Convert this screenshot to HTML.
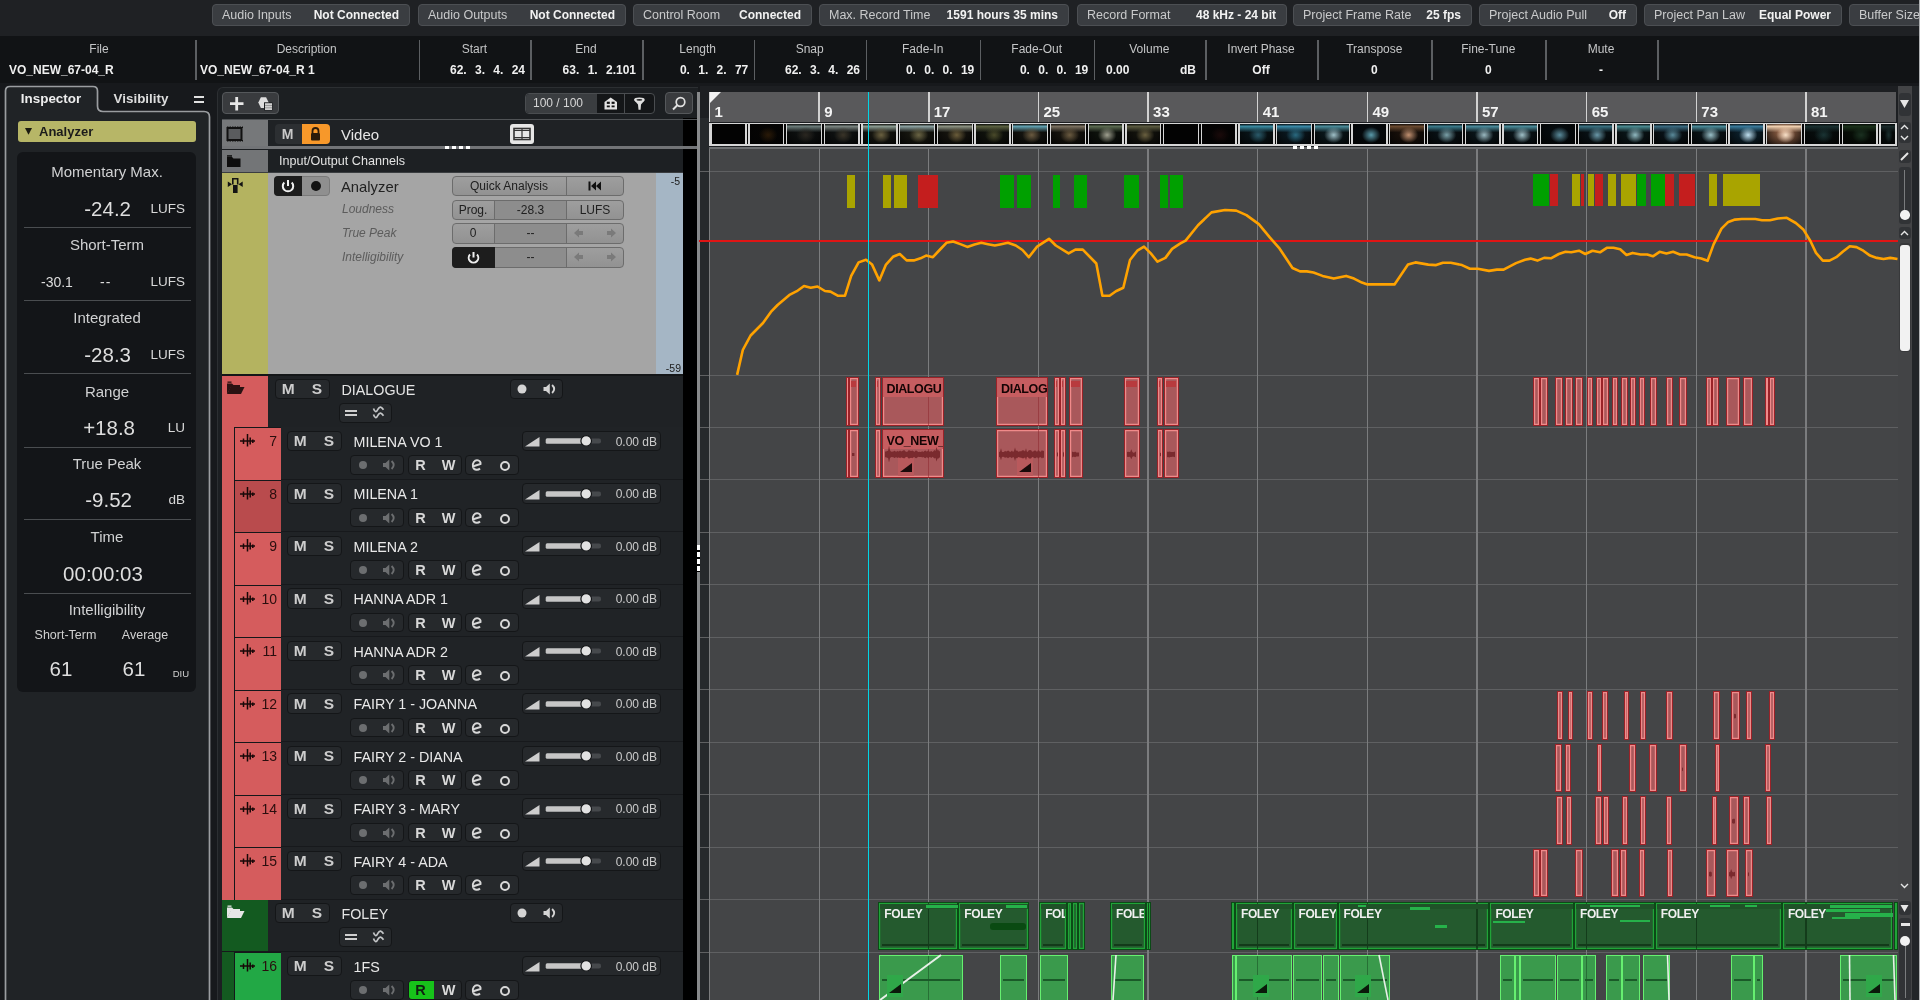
<!DOCTYPE html><html><head><meta charset="utf-8"><style>
*{box-sizing:border-box;margin:0;padding:0}
html,body{width:1920px;height:1000px;overflow:hidden}
body{background:#17191c;font-family:"Liberation Sans",sans-serif;position:relative;color:#ddd}
div{position:absolute}
.btn{background:#2c2f32;border-radius:4px;border:1px solid #26292c}
</style></head><body><div id="root" style="position:absolute;left:0;top:0;width:1920px;height:1000px;will-change:transform">
<div style="position:absolute;left:0px;top:0px;width:1920px;height:36px;background:#1f2124"></div>
<div style="position:absolute;left:212px;top:4px;width:198px;height:22px;background:#3a3d41;border:1px solid #4c4f53;border-radius:4px"></div>
<div style="position:absolute;left:222px;top:4.5px;height:20px;line-height:20px;white-space:pre;font-size:12.5px;color:#c9cacb">Audio Inputs</div>
<div style="position:absolute;left:99px;width:300px;text-align:right;top:4.5px;height:20px;line-height:20px;white-space:pre;font-size:12px;color:#f2f2f2;font-weight:bold">Not Connected</div>
<div style="position:absolute;left:418px;top:4px;width:208px;height:22px;background:#3a3d41;border:1px solid #4c4f53;border-radius:4px"></div>
<div style="position:absolute;left:428px;top:4.5px;height:20px;line-height:20px;white-space:pre;font-size:12.5px;color:#c9cacb">Audio Outputs</div>
<div style="position:absolute;left:315px;width:300px;text-align:right;top:4.5px;height:20px;line-height:20px;white-space:pre;font-size:12px;color:#f2f2f2;font-weight:bold">Not Connected</div>
<div style="position:absolute;left:633px;top:4px;width:179px;height:22px;background:#3a3d41;border:1px solid #4c4f53;border-radius:4px"></div>
<div style="position:absolute;left:643px;top:4.5px;height:20px;line-height:20px;white-space:pre;font-size:12.5px;color:#c9cacb">Control Room</div>
<div style="position:absolute;left:501px;width:300px;text-align:right;top:4.5px;height:20px;line-height:20px;white-space:pre;font-size:12px;color:#f2f2f2;font-weight:bold">Connected</div>
<div style="position:absolute;left:819px;top:4px;width:250px;height:22px;background:#3a3d41;border:1px solid #4c4f53;border-radius:4px"></div>
<div style="position:absolute;left:829px;top:4.5px;height:20px;line-height:20px;white-space:pre;font-size:12.5px;color:#c9cacb">Max. Record Time</div>
<div style="position:absolute;left:758px;width:300px;text-align:right;top:4.5px;height:20px;line-height:20px;white-space:pre;font-size:12px;color:#f2f2f2;font-weight:bold">1591 hours 35 mins</div>
<div style="position:absolute;left:1077px;top:4px;width:210px;height:22px;background:#3a3d41;border:1px solid #4c4f53;border-radius:4px"></div>
<div style="position:absolute;left:1087px;top:4.5px;height:20px;line-height:20px;white-space:pre;font-size:12.5px;color:#c9cacb">Record Format</div>
<div style="position:absolute;left:976px;width:300px;text-align:right;top:4.5px;height:20px;line-height:20px;white-space:pre;font-size:12px;color:#f2f2f2;font-weight:bold">48 kHz - 24 bit</div>
<div style="position:absolute;left:1293px;top:4px;width:179px;height:22px;background:#3a3d41;border:1px solid #4c4f53;border-radius:4px"></div>
<div style="position:absolute;left:1303px;top:4.5px;height:20px;line-height:20px;white-space:pre;font-size:12.5px;color:#c9cacb">Project Frame Rate</div>
<div style="position:absolute;left:1161px;width:300px;text-align:right;top:4.5px;height:20px;line-height:20px;white-space:pre;font-size:12px;color:#f2f2f2;font-weight:bold">25 fps</div>
<div style="position:absolute;left:1479px;top:4px;width:158px;height:22px;background:#3a3d41;border:1px solid #4c4f53;border-radius:4px"></div>
<div style="position:absolute;left:1489px;top:4.5px;height:20px;line-height:20px;white-space:pre;font-size:12.5px;color:#c9cacb">Project Audio Pull</div>
<div style="position:absolute;left:1326px;width:300px;text-align:right;top:4.5px;height:20px;line-height:20px;white-space:pre;font-size:12px;color:#f2f2f2;font-weight:bold">Off</div>
<div style="position:absolute;left:1644px;top:4px;width:198px;height:22px;background:#3a3d41;border:1px solid #4c4f53;border-radius:4px"></div>
<div style="position:absolute;left:1654px;top:4.5px;height:20px;line-height:20px;white-space:pre;font-size:12.5px;color:#c9cacb">Project Pan Law</div>
<div style="position:absolute;left:1531px;width:300px;text-align:right;top:4.5px;height:20px;line-height:20px;white-space:pre;font-size:12px;color:#f2f2f2;font-weight:bold">Equal Power</div>
<div style="position:absolute;left:1849px;top:4px;width:111px;height:22px;background:#3a3d41;border:1px solid #4c4f53;border-radius:4px"></div>
<div style="position:absolute;left:1859px;top:4.5px;height:20px;line-height:20px;white-space:pre;font-size:12.5px;color:#c9cacb">Buffer Size</div>
<div style="position:absolute;left:0px;top:36px;width:1920px;height:47px;background:#111315"></div>
<div style="position:absolute;left:195.2px;top:40px;width:1.5px;height:40px;background:#5c5f62"></div>
<div style="position:absolute;left:418.5px;top:40px;width:1.5px;height:40px;background:#5c5f62"></div>
<div style="position:absolute;left:530.2px;top:40px;width:1.5px;height:40px;background:#5c5f62"></div>
<div style="position:absolute;left:642.2px;top:40px;width:1.5px;height:40px;background:#5c5f62"></div>
<div style="position:absolute;left:753.8px;top:40px;width:1.5px;height:40px;background:#5c5f62"></div>
<div style="position:absolute;left:865.5px;top:40px;width:1.5px;height:40px;background:#5c5f62"></div>
<div style="position:absolute;left:979.5px;top:40px;width:1.5px;height:40px;background:#5c5f62"></div>
<div style="position:absolute;left:1093.5px;top:40px;width:1.5px;height:40px;background:#5c5f62"></div>
<div style="position:absolute;left:1205.2px;top:40px;width:1.5px;height:40px;background:#5c5f62"></div>
<div style="position:absolute;left:1317.2px;top:40px;width:1.5px;height:40px;background:#5c5f62"></div>
<div style="position:absolute;left:1431.2px;top:40px;width:1.5px;height:40px;background:#5c5f62"></div>
<div style="position:absolute;left:1545.2px;top:40px;width:1.5px;height:40px;background:#5c5f62"></div>
<div style="position:absolute;left:1657.2px;top:40px;width:1.5px;height:40px;background:#5c5f62"></div>
<div style="position:absolute;left:-51px;width:300px;text-align:center;top:38.5px;height:20px;line-height:20px;white-space:pre;font-size:12px;color:#c4c5c6">File</div>
<div style="position:absolute;left:156.7px;width:300px;text-align:center;top:38.5px;height:20px;line-height:20px;white-space:pre;font-size:12px;color:#c4c5c6">Description</div>
<div style="position:absolute;left:324.3px;width:300px;text-align:center;top:38.5px;height:20px;line-height:20px;white-space:pre;font-size:12px;color:#c4c5c6">Start</div>
<div style="position:absolute;left:436px;width:300px;text-align:center;top:38.5px;height:20px;line-height:20px;white-space:pre;font-size:12px;color:#c4c5c6">End</div>
<div style="position:absolute;left:547.7px;width:300px;text-align:center;top:38.5px;height:20px;line-height:20px;white-space:pre;font-size:12px;color:#c4c5c6">Length</div>
<div style="position:absolute;left:659.7px;width:300px;text-align:center;top:38.5px;height:20px;line-height:20px;white-space:pre;font-size:12px;color:#c4c5c6">Snap</div>
<div style="position:absolute;left:772.7px;width:300px;text-align:center;top:38.5px;height:20px;line-height:20px;white-space:pre;font-size:12px;color:#c4c5c6">Fade-In</div>
<div style="position:absolute;left:886.7px;width:300px;text-align:center;top:38.5px;height:20px;line-height:20px;white-space:pre;font-size:12px;color:#c4c5c6">Fade-Out</div>
<div style="position:absolute;left:999.3px;width:300px;text-align:center;top:38.5px;height:20px;line-height:20px;white-space:pre;font-size:12px;color:#c4c5c6">Volume</div>
<div style="position:absolute;left:1111px;width:300px;text-align:center;top:38.5px;height:20px;line-height:20px;white-space:pre;font-size:12px;color:#c4c5c6">Invert Phase</div>
<div style="position:absolute;left:1224.3px;width:300px;text-align:center;top:38.5px;height:20px;line-height:20px;white-space:pre;font-size:12px;color:#c4c5c6">Transpose</div>
<div style="position:absolute;left:1338.3px;width:300px;text-align:center;top:38.5px;height:20px;line-height:20px;white-space:pre;font-size:12px;color:#c4c5c6">Fine-Tune</div>
<div style="position:absolute;left:1451px;width:300px;text-align:center;top:38.5px;height:20px;line-height:20px;white-space:pre;font-size:12px;color:#c4c5c6">Mute</div>
<div style="position:absolute;left:9px;top:60px;height:20px;line-height:20px;white-space:pre;font-size:12px;color:#f0f0f0;font-weight:bold">VO_NEW_67-04_R</div>
<div style="position:absolute;left:200px;top:60px;height:20px;line-height:20px;white-space:pre;font-size:12px;color:#f0f0f0;font-weight:bold">VO_NEW_67-04_R 1</div>
<div style="position:absolute;left:225px;width:300px;text-align:right;top:60px;height:20px;line-height:20px;white-space:pre;font-size:12px;color:#f0f0f0;font-weight:bold;word-spacing:5px">62. 3. 4. 24</div>
<div style="position:absolute;left:336px;width:300px;text-align:right;top:60px;height:20px;line-height:20px;white-space:pre;font-size:12px;color:#f0f0f0;font-weight:bold;word-spacing:5px">63. 1. 2.101</div>
<div style="position:absolute;left:448.29999999999995px;width:300px;text-align:right;top:60px;height:20px;line-height:20px;white-space:pre;font-size:12px;color:#f0f0f0;font-weight:bold;word-spacing:5px">0. 1. 2. 77</div>
<div style="position:absolute;left:560px;width:300px;text-align:right;top:60px;height:20px;line-height:20px;white-space:pre;font-size:12px;color:#f0f0f0;font-weight:bold;word-spacing:5px">62. 3. 4. 26</div>
<div style="position:absolute;left:674.3px;width:300px;text-align:right;top:60px;height:20px;line-height:20px;white-space:pre;font-size:12px;color:#f0f0f0;font-weight:bold;word-spacing:5px">0. 0. 0. 19</div>
<div style="position:absolute;left:788.3px;width:300px;text-align:right;top:60px;height:20px;line-height:20px;white-space:pre;font-size:12px;color:#f0f0f0;font-weight:bold;word-spacing:5px">0. 0. 0. 19</div>
<div style="position:absolute;left:1106px;top:60px;height:20px;line-height:20px;white-space:pre;font-size:12px;color:#f0f0f0;font-weight:bold">0.00</div>
<div style="position:absolute;left:896px;width:300px;text-align:right;top:60px;height:20px;line-height:20px;white-space:pre;font-size:12px;color:#f0f0f0;font-weight:bold">dB</div>
<div style="position:absolute;left:1111px;width:300px;text-align:center;top:60px;height:20px;line-height:20px;white-space:pre;font-size:12px;color:#f0f0f0;font-weight:bold">Off</div>
<div style="position:absolute;left:1224.3px;width:300px;text-align:center;top:60px;height:20px;line-height:20px;white-space:pre;font-size:12px;color:#f0f0f0;font-weight:bold">0</div>
<div style="position:absolute;left:1338.3px;width:300px;text-align:center;top:60px;height:20px;line-height:20px;white-space:pre;font-size:12px;color:#f0f0f0;font-weight:bold">0</div>
<div style="position:absolute;left:1451px;width:300px;text-align:center;top:60px;height:20px;line-height:20px;white-space:pre;font-size:12px;color:#f0f0f0;font-weight:bold">-</div>
<svg style="position:absolute;left:0;top:82px" width="217" height="918"><path d="M5.5 918 V9 Q5.5 4.5 10 4.5 H93 Q97.5 4.5 97.5 9 V24 Q97.5 29.5 103 29.5 H204 Q209.5 29.5 209.5 35 V918" fill="#202326" stroke="#9a9da0" stroke-width="1.7"/></svg>
<div style="position:absolute;left:-99px;width:300px;text-align:center;top:89px;height:20px;line-height:20px;white-space:pre;font-size:13.4px;font-weight:bold;color:#eeeeee">Inspector</div>
<div style="position:absolute;left:-9px;width:300px;text-align:center;top:89px;height:20px;line-height:20px;white-space:pre;font-size:13.4px;font-weight:bold;color:#dddddd">Visibility</div>
<div style="position:absolute;left:194px;top:96px;width:9.5px;height:2.2px;background:#e0e0e0"></div>
<div style="position:absolute;left:194px;top:100.5px;width:9.5px;height:2.2px;background:#e0e0e0"></div>
<div style="position:absolute;left:18px;top:121px;width:178px;height:21px;background:#b7b667;border-radius:3px"></div>
<svg style="position:absolute;left:24.5px;top:128px" width="8" height="8"><path d="M0 0 H7 L3.5 6.8Z" fill="#1b1b10"/></svg>
<div style="position:absolute;left:39px;top:122px;height:20px;line-height:20px;white-space:pre;font-size:13px;font-weight:bold;color:#1b1b1b">Analyzer</div>
<div style="position:absolute;left:17px;top:152px;width:179px;height:540px;background:#131518;border-radius:6px"></div>
<div style="position:absolute;left:-43px;width:300px;text-align:center;top:162px;height:20px;line-height:20px;white-space:pre;font-size:15px;color:#d0d1d2">Momentary Max.</div>
<div style="position:absolute;left:-169px;width:300px;text-align:right;top:199px;height:20px;line-height:20px;white-space:pre;font-size:20.5px;color:#dedede">-24.2</div>
<div style="position:absolute;left:-115px;width:300px;text-align:right;top:199px;height:20px;line-height:20px;white-space:pre;font-size:13.5px;color:#d8d8d8">LUFS</div>
<div style="position:absolute;left:24px;top:227px;width:167px;height:1.2px;background:#4a4d50"></div>
<div style="position:absolute;left:-43px;width:300px;text-align:center;top:235px;height:20px;line-height:20px;white-space:pre;font-size:15px;color:#d0d1d2">Short-Term</div>
<div style="position:absolute;left:41px;top:271.5px;height:20px;line-height:20px;white-space:pre;font-size:14px;color:#dcdcdc">-30.1</div>
<div style="position:absolute;left:100px;top:271.5px;height:20px;line-height:20px;white-space:pre;font-size:14px;color:#dcdcdc;letter-spacing:1px">--</div>
<div style="position:absolute;left:-115px;width:300px;text-align:right;top:271.5px;height:20px;line-height:20px;white-space:pre;font-size:13.5px;color:#d8d8d8">LUFS</div>
<div style="position:absolute;left:24px;top:300px;width:167px;height:1.2px;background:#4a4d50"></div>
<div style="position:absolute;left:-43px;width:300px;text-align:center;top:308px;height:20px;line-height:20px;white-space:pre;font-size:15px;color:#d0d1d2">Integrated</div>
<div style="position:absolute;left:-169px;width:300px;text-align:right;top:344.5px;height:20px;line-height:20px;white-space:pre;font-size:20.5px;color:#dedede">-28.3</div>
<div style="position:absolute;left:-115px;width:300px;text-align:right;top:344.5px;height:20px;line-height:20px;white-space:pre;font-size:13.5px;color:#d8d8d8">LUFS</div>
<div style="position:absolute;left:24px;top:373px;width:167px;height:1.2px;background:#4a4d50"></div>
<div style="position:absolute;left:-43px;width:300px;text-align:center;top:381.5px;height:20px;line-height:20px;white-space:pre;font-size:15px;color:#d0d1d2">Range</div>
<div style="position:absolute;left:-165px;width:300px;text-align:right;top:417.8px;height:20px;line-height:20px;white-space:pre;font-size:20.5px;color:#dedede">+18.8</div>
<div style="position:absolute;left:-115px;width:300px;text-align:right;top:417.8px;height:20px;line-height:20px;white-space:pre;font-size:13.5px;color:#d8d8d8">LU</div>
<div style="position:absolute;left:24px;top:446.5px;width:167px;height:1.2px;background:#4a4d50"></div>
<div style="position:absolute;left:-43px;width:300px;text-align:center;top:454px;height:20px;line-height:20px;white-space:pre;font-size:15px;color:#d0d1d2">True Peak</div>
<div style="position:absolute;left:-168px;width:300px;text-align:right;top:490.4px;height:20px;line-height:20px;white-space:pre;font-size:20.5px;color:#dedede">-9.52</div>
<div style="position:absolute;left:-115px;width:300px;text-align:right;top:490.4px;height:20px;line-height:20px;white-space:pre;font-size:13.5px;color:#d8d8d8">dB</div>
<div style="position:absolute;left:24px;top:519px;width:167px;height:1.2px;background:#4a4d50"></div>
<div style="position:absolute;left:-43px;width:300px;text-align:center;top:527.3px;height:20px;line-height:20px;white-space:pre;font-size:15px;color:#d0d1d2">Time</div>
<div style="position:absolute;left:-47px;width:300px;text-align:center;top:563.6px;height:20px;line-height:20px;white-space:pre;font-size:20.5px;color:#dedede">00:00:03</div>
<div style="position:absolute;left:24px;top:592.5px;width:167px;height:1.2px;background:#4a4d50"></div>
<div style="position:absolute;left:-43px;width:300px;text-align:center;top:600.3px;height:20px;line-height:20px;white-space:pre;font-size:15px;color:#d0d1d2">Intelligibility</div>
<div style="position:absolute;left:-84.5px;width:300px;text-align:center;top:625px;height:20px;line-height:20px;white-space:pre;font-size:12.5px;color:#d0d0d0">Short-Term</div>
<div style="position:absolute;left:-5px;width:300px;text-align:center;top:625px;height:20px;line-height:20px;white-space:pre;font-size:12.5px;color:#d0d0d0">Average</div>
<div style="position:absolute;left:-89px;width:300px;text-align:center;top:658.7px;height:20px;line-height:20px;white-space:pre;font-size:20.5px;color:#dedede">61</div>
<div style="position:absolute;left:-16px;width:300px;text-align:center;top:658.7px;height:20px;line-height:20px;white-space:pre;font-size:20.5px;color:#dedede">61</div>
<div style="position:absolute;left:-111px;width:300px;text-align:right;top:664.3px;height:20px;line-height:20px;white-space:pre;font-size:9.5px;color:#cfcfcf">DIU</div>
<div style="position:absolute;left:216.5px;top:86.5px;width:481px;height:920px;background:#1c1f22;border-left:1px solid #2c2f32;border-top:1px solid #2c2f32;border-radius:6px 0 0 0"></div>
<div style="position:absolute;left:222px;top:92px;width:57px;height:22px;background:#393b3e;border-radius:4px;border:1.2px solid #55585b"></div>
<svg style="position:absolute;left:228px;top:95px" width="48" height="16"><path d="M8.7 2v13.5M2 8.7h13.5" stroke="#e8e8e8" stroke-width="2.8"/><path d="M30.3 7.6 L32.9 2.2 H38.1 L40.7 7.6 L38.1 13 H32.9Z" fill="#dedede"/><rect x="36" y="7.3" width="8.5" height="8.2" fill="#1c1e20"/><rect x="37" y="8.2" width="7" height="6.8" fill="#d0d0d0"/><path d="M37 10.5 H44 M37 12.8 H44" stroke="#8a8a8a" stroke-width="0.8"/></svg>
<div style="position:absolute;left:525px;top:93px;width:129.5px;height:21px;background:#141618;border-radius:4px;border:1.2px solid #4a4d50"></div>
<div style="position:absolute;left:525.5px;top:93.6px;width:71px;height:19.8px;background:#3a3d40;border-radius:3px 0 0 3px"></div>
<div style="position:absolute;left:408px;width:300px;text-align:center;top:93px;height:20px;line-height:20px;white-space:pre;font-size:12px;color:#d6d6d6">100 / 100</div>
<div style="position:absolute;left:624px;top:93.5px;width:1.2px;height:20px;background:#4a4d50"></div>
<svg style="position:absolute;left:603px;top:96px" width="44" height="16"><path d="M1.5 13.5 V6 L7.7 1.6 L14 6 V13.5Z" fill="#e4e4e4"/><rect x="3.8" y="5.7" width="3" height="2.2" fill="#111"/><rect x="8.6" y="5.7" width="3" height="2.2" fill="#111"/><rect x="3.8" y="9.5" width="3" height="1.8" fill="#111"/><rect x="8.6" y="9.5" width="3" height="1.8" fill="#111"/><path d="M31.5 4.5 L41.5 4.5 L38 8.5 L37.6 13.7 H35.5 L35 8.5Z" fill="#e0e0e0"/><ellipse cx="36.4" cy="3.8" rx="5.3" ry="2.3" fill="#e0e0e0"/><ellipse cx="36.4" cy="3.8" rx="3" ry="0.9" fill="#222"/></svg>
<div style="position:absolute;left:665px;top:92px;width:28px;height:22px;background:#393b3e;border-radius:4px;border:1.2px solid #55585b"></div>
<svg style="position:absolute;left:671px;top:96px" width="16" height="15"><circle cx="9.5" cy="6" r="4.3" fill="none" stroke="#e0e0e0" stroke-width="1.7"/><path d="M6.5 9 L2 13.5" stroke="#e0e0e0" stroke-width="1.9"/></svg>
<div style="position:absolute;left:683px;top:118px;width:14px;height:882px;background:#000"></div>
<div style="position:absolute;left:697px;top:92px;width:2.5px;height:908px;background:#87898b"></div>
<div style="position:absolute;left:222px;top:118.5px;width:475px;height:1.5px;background:#505356"></div>
<div style="position:absolute;left:222px;top:120px;width:46px;height:26px;background:#76787a"></div>
<div style="position:absolute;left:268px;top:120px;width:415px;height:26px;background:#1f2225"></div>
<svg style="position:absolute;left:226px;top:126px" width="18" height="16"><rect x="1.5" y="2" width="14" height="12" fill="#5a5c5e" stroke="#111" stroke-width="2"/><path d="M1 1.2h16M1 14.8h16" stroke="#111" stroke-width="1.6" stroke-dasharray="1.5 1"/></svg>
<div style="position:absolute;left:275px;top:124px;width:55px;height:20px;background:#2c2f32;border-radius:4px"></div>
<div style="position:absolute;left:301.5px;top:124px;width:28.5px;height:20px;background:#f7982a;border-radius:0 4px 4px 0"></div>
<div style="position:absolute;left:137.5px;width:300px;text-align:center;top:124px;height:20px;line-height:20px;white-space:pre;font-size:14px;font-weight:bold;color:#c9c9c9">M</div>
<svg style="position:absolute;left:309px;top:126px" width="13" height="15"><path d="M3.5 7V5a3 3 0 0 1 6 0v2" fill="none" stroke="#2a1a0a" stroke-width="1.8"/><rect x="2" y="7" width="9" height="7.5" fill="#2a1a0a" rx="1"/></svg>
<div style="position:absolute;left:341px;top:125px;height:20px;line-height:20px;white-space:pre;font-size:15px;color:#e6e6e6">Video</div>
<div style="position:absolute;left:510px;top:124px;width:24px;height:20px;background:#e6e6e6;border-radius:3px"></div>
<svg style="position:absolute;left:513px;top:127px" width="18" height="14"><rect x="1" y="1.5" width="16" height="11" fill="none" stroke="#333" stroke-width="1.6"/><path d="M9 1.5v11M1 3.5h16M1 10.5h16" stroke="#333" stroke-width="1.2"/></svg>
<div style="position:absolute;left:222px;top:146px;width:475px;height:3px;background:#727477"></div>
<div style="position:absolute;left:445px;top:146px;width:27px;height:3px;background:repeating-linear-gradient(90deg,#fff 0 4px,transparent 4px 7px)"></div>
<div style="position:absolute;left:222px;top:150px;width:46px;height:22px;background:#737577"></div>
<div style="position:absolute;left:268px;top:150px;width:415px;height:22px;background:#1d2023"></div>
<svg style="position:absolute;left:226px;top:154px" width="16" height="14"><path d="M1 3 H6 L7.5 4.5 H14.5 V13 H1 Z" fill="#0d0d0d"/><rect x="1" y="1.2" width="5" height="1.5" fill="#0d0d0d"/></svg>
<div style="position:absolute;left:279px;top:151px;height:20px;line-height:20px;white-space:pre;font-size:12.6px;color:#e2e2e2">Input/Output Channels</div>
<div style="position:absolute;left:222px;top:172px;width:461px;height:1px;background:#3a3d40"></div>
<div style="position:absolute;left:222px;top:173px;width:46px;height:201px;background:#b4b360"></div>
<div style="position:absolute;left:268px;top:173px;width:388px;height:201px;background:#a5a5a5"></div>
<div style="position:absolute;left:656px;top:173px;width:27px;height:201px;background:#a5b6c5"></div>
<svg style="position:absolute;left:227px;top:176px" width="18" height="20"><path d="M5.8 8.5 V2.8 H10.7 V8.5" fill="none" stroke="#141414" stroke-width="1.6"/><rect x="6" y="9" width="4.6" height="8" fill="#141414"/><path d="M0.8 5.5 L5 8.3 L0.8 11Z M15.7 5.5 L11.5 8.3 L15.7 11Z" fill="#141414"/></svg>
<div style="position:absolute;left:274px;top:176px;width:56px;height:20px;background:#8f8f8f;border-radius:4px;border:1px solid #7a7a7a"></div>
<div style="position:absolute;left:274px;top:176px;width:28px;height:20px;background:#1c1c1c;border-radius:4px 0 0 4px"></div>
<svg style="position:absolute;left:280px;top:178px" width="44" height="16"><path d="M4.3 4.5 A5.2 5.2 0 1 0 11.7 4.5" fill="none" stroke="#f0f0f0" stroke-width="2"/><path d="M8 2v6" stroke="#f0f0f0" stroke-width="2"/><circle cx="36" cy="8" r="5" fill="#111"/></svg>
<div style="position:absolute;left:341px;top:176.5px;height:20px;line-height:20px;white-space:pre;font-size:14.8px;color:#222">Analyzer</div>
<div style="position:absolute;left:342px;top:199px;height:20px;line-height:20px;white-space:pre;font-size:12px;font-style:italic;color:#5c5c5c">Loudness</div>
<div style="position:absolute;left:342px;top:223px;height:20px;line-height:20px;white-space:pre;font-size:12px;font-style:italic;color:#5c5c5c">True Peak</div>
<div style="position:absolute;left:342px;top:247px;height:20px;line-height:20px;white-space:pre;font-size:12px;font-style:italic;color:#5c5c5c">Intelligibility</div>
<div style="position:absolute;left:452px;top:175.5px;width:172px;height:20.5px;background:linear-gradient(#9e9e9e,#929292);border:1px solid #6c6c6c;border-radius:4px;"></div>
<div style="position:absolute;left:566px;top:176px;width:1px;height:20px;background:#6c6c6c"></div>
<div style="position:absolute;left:359px;width:300px;text-align:center;top:175.5px;height:20px;line-height:20px;white-space:pre;font-size:12px;color:#202020">Quick Analysis</div>
<svg style="position:absolute;left:588px;top:181px" width="14" height="10"><rect x="0.5" y="0.5" width="2" height="9" fill="#111"/><path d="M8 0.5 L3 5 L8 9.5Z M13 0.5 L8 5 L13 9.5Z" fill="#111"/></svg>
<div style="position:absolute;left:452px;top:199.5px;width:172px;height:20.5px;background:linear-gradient(#9e9e9e,#929292);border:1px solid #6c6c6c;border-radius:4px;"></div>
<div style="position:absolute;left:494px;top:200.0px;width:1px;height:19.5px;background:#6c6c6c"></div>
<div style="position:absolute;left:566px;top:200.0px;width:1px;height:19.5px;background:#6c6c6c"></div>
<div style="position:absolute;left:495px;top:200.5px;width:71px;height:18.5px;background:#8d8d8d"></div>
<div style="position:absolute;left:452px;top:223px;width:172px;height:20.5px;background:linear-gradient(#9e9e9e,#929292);border:1px solid #6c6c6c;border-radius:4px;"></div>
<div style="position:absolute;left:494px;top:223.5px;width:1px;height:19.5px;background:#6c6c6c"></div>
<div style="position:absolute;left:566px;top:223.5px;width:1px;height:19.5px;background:#6c6c6c"></div>
<div style="position:absolute;left:495px;top:224px;width:71px;height:18.5px;background:#8d8d8d"></div>
<div style="position:absolute;left:452px;top:247px;width:172px;height:20.5px;background:linear-gradient(#9e9e9e,#929292);border:1px solid #6c6c6c;border-radius:4px;"></div>
<div style="position:absolute;left:494px;top:247.5px;width:1px;height:19.5px;background:#6c6c6c"></div>
<div style="position:absolute;left:566px;top:247.5px;width:1px;height:19.5px;background:#6c6c6c"></div>
<div style="position:absolute;left:495px;top:248px;width:71px;height:18.5px;background:#8d8d8d"></div>
<div style="position:absolute;left:323px;width:300px;text-align:center;top:199.5px;height:20px;line-height:20px;white-space:pre;font-size:12px;color:#202020">Prog.</div>
<div style="position:absolute;left:380.5px;width:300px;text-align:center;top:199.5px;height:20px;line-height:20px;white-space:pre;font-size:12px;color:#202020">-28.3</div>
<div style="position:absolute;left:445px;width:300px;text-align:center;top:199.5px;height:20px;line-height:20px;white-space:pre;font-size:12px;color:#202020">LUFS</div>
<div style="position:absolute;left:323px;width:300px;text-align:center;top:223px;height:20px;line-height:20px;white-space:pre;font-size:12px;color:#202020">0</div>
<div style="position:absolute;left:380.5px;width:300px;text-align:center;top:223px;height:20px;line-height:20px;white-space:pre;font-size:12px;color:#202020">--</div>
<div style="position:absolute;left:380.5px;width:300px;text-align:center;top:247px;height:20px;line-height:20px;white-space:pre;font-size:12px;color:#202020">--</div>
<div style="position:absolute;left:452px;top:247px;width:42.5px;height:20.5px;background:#1d1d1d;border-radius:4px 0 0 4px"></div>
<svg style="position:absolute;left:466px;top:250px" width="15" height="15"><path d="M4 4.5 A4.8 4.8 0 1 0 11 4.5" fill="none" stroke="#f0f0f0" stroke-width="2"/><path d="M7.5 2v5.5" stroke="#f0f0f0" stroke-width="2"/></svg>
<svg style="position:absolute;left:573px;top:228px" width="44" height="10"><path d="M1 5 L6 0.5 V3 H10 V7 H6 V9.5Z" fill="#7a7a7a"/><path d="M43 5 L38 0.5 V3 H34 V7 H38 V9.5Z" fill="#7a7a7a"/></svg>
<svg style="position:absolute;left:573px;top:252px" width="44" height="10"><path d="M1 5 L6 0.5 V3 H10 V7 H6 V9.5Z" fill="#7a7a7a"/><path d="M43 5 L38 0.5 V3 H34 V7 H38 V9.5Z" fill="#7a7a7a"/></svg>
<div style="position:absolute;left:380px;width:300px;text-align:right;top:171px;height:20px;line-height:20px;white-space:pre;font-size:10.5px;color:#202020">-5</div>
<div style="position:absolute;left:381px;width:300px;text-align:right;top:358px;height:20px;line-height:20px;white-space:pre;font-size:10.5px;color:#202020">-59</div>
<div style="position:absolute;left:222px;top:374px;width:461px;height:2px;background:#141618"></div>
<div style="position:absolute;left:222px;top:376px;width:46px;height:51px;background:#d55c5d"></div>
<div style="position:absolute;left:268px;top:376px;width:415px;height:51px;background:#1f2225"></div>
<svg style="position:absolute;left:226px;top:381px" width="20" height="15"><path d="M1 2.5 H6 L7.5 4 H14 V6 H5 L1 13Z" fill="#2a1212"/><path d="M1 13 L4.5 6 H18.5 L15 13Z" fill="#2a1212"/><rect x="1.5" y="0.5" width="4" height="1.3" fill="#2a1212"/></svg>
<div style="position:absolute;left:275px;top:379px;width:55px;height:19.5px;background:#26292c;border-radius:4px;border:1px solid #141618"></div>
<div style="position:absolute;left:138.2px;width:300px;text-align:center;top:379.25px;height:20px;line-height:20px;white-space:pre;font-size:15.5px;font-weight:bold;color:#cdcdcd">M</div>
<div style="position:absolute;left:166.8px;width:300px;text-align:center;top:379.25px;height:20px;line-height:20px;white-space:pre;font-size:15.5px;font-weight:bold;color:#cdcdcd">S</div>
<div style="position:absolute;left:341.5px;top:379.5px;height:20px;line-height:20px;white-space:pre;font-size:14.3px;color:#e4e4e4">DIALOGUE</div>
<div style="position:absolute;left:510px;top:379px;width:52.5px;height:19.5px;background:#26292c;border-radius:4px;border:1px solid #141618"></div>
<svg style="position:absolute;left:515px;top:382px" width="42" height="14"><circle cx="7" cy="7" r="4.5" fill="#d4d4d4"/><g transform="translate(27.5,0)"><path d="M1 5 H3.5 L7.3 1.5 V12.5 L3.5 9 H1Z" fill="#d4d4d4"/><path d="M9.6 3 Q13.8 7 9.6 11" fill="none" stroke="#d4d4d4" stroke-width="1.9"/></g></svg>
<div style="position:absolute;left:339px;top:403px;width:52.5px;height:19.5px;background:#26292c;border-radius:4px;border:1px solid #141618"></div>
<svg style="position:absolute;left:344px;top:406px" width="42" height="14"><path d="M1 5 H13 M1 9 H13" stroke="#cfcfcf" stroke-width="2"/><path d="M29.5 2.5 C30.8 6.5 32.5 6.5 34 3.2 C35.5 0 37.5 0.5 39.5 3.8 M29.5 8.5 C30.8 12.5 32.5 12.5 34 9.2 C35.5 6 37.5 6.5 39.5 9.8" fill="none" stroke="#c4c6c8" stroke-width="1.7"/></svg>
<div style="position:absolute;left:222px;top:427px;width:461px;height:1.5px;background:#16181b"></div>
<div style="position:absolute;left:222px;top:427.0px;width:12px;height:52.5px;background:#d55c5d"></div>
<div style="position:absolute;left:234px;top:427.0px;width:47px;height:52.5px;background:#d55c5d;border-left:1.5px solid #15171a;border-top:1.5px solid #15171a"></div>
<div style="position:absolute;left:281px;top:427.0px;width:402px;height:52.5px;background:#202326"></div>
<svg style="position:absolute;left:240px;top:434.0px" width="16" height="14"><path d="M0 7 H15 M3.5 4.5 V10 M7.5 0 V12.5 M10.2 3.5 V10.5 M12.8 5.5 V9" stroke="#180808" stroke-width="1.5" fill="none"/></svg>
<div style="position:absolute;left:-23px;width:300px;text-align:right;top:431.0px;height:20px;line-height:20px;white-space:pre;font-size:14px;color:#2a0e0e">7</div>
<div style="position:absolute;left:287px;top:430.5px;width:55px;height:20.5px;background:#26292c;border-radius:4px;border:1px solid #141618"></div>
<div style="position:absolute;left:150.2px;width:300px;text-align:center;top:431.25px;height:20px;line-height:20px;white-space:pre;font-size:15.5px;font-weight:bold;color:#cdcdcd">M</div>
<div style="position:absolute;left:178.8px;width:300px;text-align:center;top:431.25px;height:20px;line-height:20px;white-space:pre;font-size:15.5px;font-weight:bold;color:#cdcdcd">S</div>
<div style="position:absolute;left:353.5px;top:431.5px;height:20px;line-height:20px;white-space:pre;font-size:14.3px;color:#e8e8e8">MILENA VO 1</div>
<div style="position:absolute;left:522px;top:430.5px;width:139px;height:20.5px;background:#26292c;border-radius:4px;border:1px solid #141618"></div>
<svg style="position:absolute;left:524px;top:435.0px" width="80" height="13"><path d="M1 11.4 L15.5 2 V11.4Z" fill="#cdcdcd"/><rect x="21.7" y="3.2" width="44" height="5.5" rx="1.5" fill="#c6c6c6"/><rect x="64" y="3.5" width="13" height="5" rx="2" fill="#46494c"/><circle cx="62.2" cy="5.9" r="5.3" fill="#e2e2e2" stroke="#121416" stroke-width="1.2"/></svg>
<div style="position:absolute;left:357px;width:300px;text-align:right;top:431.5px;height:20px;line-height:20px;white-space:pre;font-size:12px;color:#cdcdcd">0.00 dB</div>
<div style="position:absolute;left:350px;top:455.0px;width:53.5px;height:19.5px;background:#26292c;border-radius:4px;border:1px solid #141618"></div>
<div style="position:absolute;left:408px;top:455.0px;width:53.5px;height:19.5px;background:#26292c;border-radius:4px;border:1px solid #141618"></div>
<div style="position:absolute;left:465px;top:455.0px;width:53.5px;height:19.5px;background:#26292c;border-radius:4px;border:1px solid #141618"></div>
<svg style="position:absolute;left:355px;top:458.0px" width="44" height="14"><circle cx="8" cy="7" r="4" fill="#6c6e70"/><g transform="translate(27,0)"><path d="M1 5 H3.5 L7.3 1.5 V12.5 L3.5 9 H1Z" fill="#6c6e70"/><path d="M9.6 3 Q13.8 7 9.6 11" fill="none" stroke="#6c6e70" stroke-width="1.9"/></g></svg>
<div style="position:absolute;left:270.5px;width:300px;text-align:center;top:455.0px;height:20px;line-height:20px;white-space:pre;font-size:14.5px;font-weight:bold;color:#d8d8d8">R</div>
<div style="position:absolute;left:298.5px;width:300px;text-align:center;top:455.0px;height:20px;line-height:20px;white-space:pre;font-size:14.5px;font-weight:bold;color:#d8d8d8">W</div>
<svg style="position:absolute;left:469px;top:458.0px" width="44" height="14"><path d="M3.5 8.5 L11.5 6 C12 2 7 1 4.8 4 C3 6.5 3.5 11.5 7.5 11.8 C9 11.9 10.2 11.3 11 10.5" fill="none" stroke="#d8d8d8" stroke-width="2"/><circle cx="36" cy="8" r="4" fill="none" stroke="#d8d8d8" stroke-width="2"/></svg>
<div style="position:absolute;left:281px;top:478.5px;width:402px;height:1px;background:#17191c"></div>
<div style="position:absolute;left:222px;top:479.5px;width:12px;height:52.5px;background:#d55c5d"></div>
<div style="position:absolute;left:234px;top:479.5px;width:47px;height:52.5px;background:#b94b4d;border-left:1.5px solid #15171a;border-top:1.5px solid #15171a"></div>
<div style="position:absolute;left:281px;top:479.5px;width:402px;height:52.5px;background:#202326"></div>
<svg style="position:absolute;left:240px;top:486.5px" width="16" height="14"><path d="M0 7 H15 M3.5 4.5 V10 M7.5 0 V12.5 M10.2 3.5 V10.5 M12.8 5.5 V9" stroke="#180808" stroke-width="1.5" fill="none"/></svg>
<div style="position:absolute;left:-23px;width:300px;text-align:right;top:483.5px;height:20px;line-height:20px;white-space:pre;font-size:14px;color:#2a0e0e">8</div>
<div style="position:absolute;left:287px;top:483.0px;width:55px;height:20.5px;background:#26292c;border-radius:4px;border:1px solid #141618"></div>
<div style="position:absolute;left:150.2px;width:300px;text-align:center;top:483.75px;height:20px;line-height:20px;white-space:pre;font-size:15.5px;font-weight:bold;color:#cdcdcd">M</div>
<div style="position:absolute;left:178.8px;width:300px;text-align:center;top:483.75px;height:20px;line-height:20px;white-space:pre;font-size:15.5px;font-weight:bold;color:#cdcdcd">S</div>
<div style="position:absolute;left:353.5px;top:484.0px;height:20px;line-height:20px;white-space:pre;font-size:14.3px;color:#e8e8e8">MILENA 1</div>
<div style="position:absolute;left:522px;top:483.0px;width:139px;height:20.5px;background:#26292c;border-radius:4px;border:1px solid #141618"></div>
<svg style="position:absolute;left:524px;top:487.5px" width="80" height="13"><path d="M1 11.4 L15.5 2 V11.4Z" fill="#cdcdcd"/><rect x="21.7" y="3.2" width="44" height="5.5" rx="1.5" fill="#c6c6c6"/><rect x="64" y="3.5" width="13" height="5" rx="2" fill="#46494c"/><circle cx="62.2" cy="5.9" r="5.3" fill="#e2e2e2" stroke="#121416" stroke-width="1.2"/></svg>
<div style="position:absolute;left:357px;width:300px;text-align:right;top:484.0px;height:20px;line-height:20px;white-space:pre;font-size:12px;color:#cdcdcd">0.00 dB</div>
<div style="position:absolute;left:350px;top:507.5px;width:53.5px;height:19.5px;background:#26292c;border-radius:4px;border:1px solid #141618"></div>
<div style="position:absolute;left:408px;top:507.5px;width:53.5px;height:19.5px;background:#26292c;border-radius:4px;border:1px solid #141618"></div>
<div style="position:absolute;left:465px;top:507.5px;width:53.5px;height:19.5px;background:#26292c;border-radius:4px;border:1px solid #141618"></div>
<svg style="position:absolute;left:355px;top:510.5px" width="44" height="14"><circle cx="8" cy="7" r="4" fill="#6c6e70"/><g transform="translate(27,0)"><path d="M1 5 H3.5 L7.3 1.5 V12.5 L3.5 9 H1Z" fill="#6c6e70"/><path d="M9.6 3 Q13.8 7 9.6 11" fill="none" stroke="#6c6e70" stroke-width="1.9"/></g></svg>
<div style="position:absolute;left:270.5px;width:300px;text-align:center;top:507.5px;height:20px;line-height:20px;white-space:pre;font-size:14.5px;font-weight:bold;color:#d8d8d8">R</div>
<div style="position:absolute;left:298.5px;width:300px;text-align:center;top:507.5px;height:20px;line-height:20px;white-space:pre;font-size:14.5px;font-weight:bold;color:#d8d8d8">W</div>
<svg style="position:absolute;left:469px;top:510.5px" width="44" height="14"><path d="M3.5 8.5 L11.5 6 C12 2 7 1 4.8 4 C3 6.5 3.5 11.5 7.5 11.8 C9 11.9 10.2 11.3 11 10.5" fill="none" stroke="#d8d8d8" stroke-width="2"/><circle cx="36" cy="8" r="4" fill="none" stroke="#d8d8d8" stroke-width="2"/></svg>
<div style="position:absolute;left:281px;top:531.0px;width:402px;height:1px;background:#17191c"></div>
<div style="position:absolute;left:222px;top:532.0px;width:12px;height:52.5px;background:#d55c5d"></div>
<div style="position:absolute;left:234px;top:532.0px;width:47px;height:52.5px;background:#d55c5d;border-left:1.5px solid #15171a;border-top:1.5px solid #15171a"></div>
<div style="position:absolute;left:281px;top:532.0px;width:402px;height:52.5px;background:#202326"></div>
<svg style="position:absolute;left:240px;top:539.0px" width="16" height="14"><path d="M0 7 H15 M3.5 4.5 V10 M7.5 0 V12.5 M10.2 3.5 V10.5 M12.8 5.5 V9" stroke="#180808" stroke-width="1.5" fill="none"/></svg>
<div style="position:absolute;left:-23px;width:300px;text-align:right;top:536.0px;height:20px;line-height:20px;white-space:pre;font-size:14px;color:#2a0e0e">9</div>
<div style="position:absolute;left:287px;top:535.5px;width:55px;height:20.5px;background:#26292c;border-radius:4px;border:1px solid #141618"></div>
<div style="position:absolute;left:150.2px;width:300px;text-align:center;top:536.25px;height:20px;line-height:20px;white-space:pre;font-size:15.5px;font-weight:bold;color:#cdcdcd">M</div>
<div style="position:absolute;left:178.8px;width:300px;text-align:center;top:536.25px;height:20px;line-height:20px;white-space:pre;font-size:15.5px;font-weight:bold;color:#cdcdcd">S</div>
<div style="position:absolute;left:353.5px;top:536.5px;height:20px;line-height:20px;white-space:pre;font-size:14.3px;color:#e8e8e8">MILENA 2</div>
<div style="position:absolute;left:522px;top:535.5px;width:139px;height:20.5px;background:#26292c;border-radius:4px;border:1px solid #141618"></div>
<svg style="position:absolute;left:524px;top:540.0px" width="80" height="13"><path d="M1 11.4 L15.5 2 V11.4Z" fill="#cdcdcd"/><rect x="21.7" y="3.2" width="44" height="5.5" rx="1.5" fill="#c6c6c6"/><rect x="64" y="3.5" width="13" height="5" rx="2" fill="#46494c"/><circle cx="62.2" cy="5.9" r="5.3" fill="#e2e2e2" stroke="#121416" stroke-width="1.2"/></svg>
<div style="position:absolute;left:357px;width:300px;text-align:right;top:536.5px;height:20px;line-height:20px;white-space:pre;font-size:12px;color:#cdcdcd">0.00 dB</div>
<div style="position:absolute;left:350px;top:560.0px;width:53.5px;height:19.5px;background:#26292c;border-radius:4px;border:1px solid #141618"></div>
<div style="position:absolute;left:408px;top:560.0px;width:53.5px;height:19.5px;background:#26292c;border-radius:4px;border:1px solid #141618"></div>
<div style="position:absolute;left:465px;top:560.0px;width:53.5px;height:19.5px;background:#26292c;border-radius:4px;border:1px solid #141618"></div>
<svg style="position:absolute;left:355px;top:563.0px" width="44" height="14"><circle cx="8" cy="7" r="4" fill="#6c6e70"/><g transform="translate(27,0)"><path d="M1 5 H3.5 L7.3 1.5 V12.5 L3.5 9 H1Z" fill="#6c6e70"/><path d="M9.6 3 Q13.8 7 9.6 11" fill="none" stroke="#6c6e70" stroke-width="1.9"/></g></svg>
<div style="position:absolute;left:270.5px;width:300px;text-align:center;top:560.0px;height:20px;line-height:20px;white-space:pre;font-size:14.5px;font-weight:bold;color:#d8d8d8">R</div>
<div style="position:absolute;left:298.5px;width:300px;text-align:center;top:560.0px;height:20px;line-height:20px;white-space:pre;font-size:14.5px;font-weight:bold;color:#d8d8d8">W</div>
<svg style="position:absolute;left:469px;top:563.0px" width="44" height="14"><path d="M3.5 8.5 L11.5 6 C12 2 7 1 4.8 4 C3 6.5 3.5 11.5 7.5 11.8 C9 11.9 10.2 11.3 11 10.5" fill="none" stroke="#d8d8d8" stroke-width="2"/><circle cx="36" cy="8" r="4" fill="none" stroke="#d8d8d8" stroke-width="2"/></svg>
<div style="position:absolute;left:281px;top:583.5px;width:402px;height:1px;background:#17191c"></div>
<div style="position:absolute;left:222px;top:584.5px;width:12px;height:52.5px;background:#d55c5d"></div>
<div style="position:absolute;left:234px;top:584.5px;width:47px;height:52.5px;background:#d55c5d;border-left:1.5px solid #15171a;border-top:1.5px solid #15171a"></div>
<div style="position:absolute;left:281px;top:584.5px;width:402px;height:52.5px;background:#202326"></div>
<svg style="position:absolute;left:240px;top:591.5px" width="16" height="14"><path d="M0 7 H15 M3.5 4.5 V10 M7.5 0 V12.5 M10.2 3.5 V10.5 M12.8 5.5 V9" stroke="#180808" stroke-width="1.5" fill="none"/></svg>
<div style="position:absolute;left:-23px;width:300px;text-align:right;top:588.5px;height:20px;line-height:20px;white-space:pre;font-size:14px;color:#2a0e0e">10</div>
<div style="position:absolute;left:287px;top:588.0px;width:55px;height:20.5px;background:#26292c;border-radius:4px;border:1px solid #141618"></div>
<div style="position:absolute;left:150.2px;width:300px;text-align:center;top:588.75px;height:20px;line-height:20px;white-space:pre;font-size:15.5px;font-weight:bold;color:#cdcdcd">M</div>
<div style="position:absolute;left:178.8px;width:300px;text-align:center;top:588.75px;height:20px;line-height:20px;white-space:pre;font-size:15.5px;font-weight:bold;color:#cdcdcd">S</div>
<div style="position:absolute;left:353.5px;top:589.0px;height:20px;line-height:20px;white-space:pre;font-size:14.3px;color:#e8e8e8">HANNA ADR 1</div>
<div style="position:absolute;left:522px;top:588.0px;width:139px;height:20.5px;background:#26292c;border-radius:4px;border:1px solid #141618"></div>
<svg style="position:absolute;left:524px;top:592.5px" width="80" height="13"><path d="M1 11.4 L15.5 2 V11.4Z" fill="#cdcdcd"/><rect x="21.7" y="3.2" width="44" height="5.5" rx="1.5" fill="#c6c6c6"/><rect x="64" y="3.5" width="13" height="5" rx="2" fill="#46494c"/><circle cx="62.2" cy="5.9" r="5.3" fill="#e2e2e2" stroke="#121416" stroke-width="1.2"/></svg>
<div style="position:absolute;left:357px;width:300px;text-align:right;top:589.0px;height:20px;line-height:20px;white-space:pre;font-size:12px;color:#cdcdcd">0.00 dB</div>
<div style="position:absolute;left:350px;top:612.5px;width:53.5px;height:19.5px;background:#26292c;border-radius:4px;border:1px solid #141618"></div>
<div style="position:absolute;left:408px;top:612.5px;width:53.5px;height:19.5px;background:#26292c;border-radius:4px;border:1px solid #141618"></div>
<div style="position:absolute;left:465px;top:612.5px;width:53.5px;height:19.5px;background:#26292c;border-radius:4px;border:1px solid #141618"></div>
<svg style="position:absolute;left:355px;top:615.5px" width="44" height="14"><circle cx="8" cy="7" r="4" fill="#6c6e70"/><g transform="translate(27,0)"><path d="M1 5 H3.5 L7.3 1.5 V12.5 L3.5 9 H1Z" fill="#6c6e70"/><path d="M9.6 3 Q13.8 7 9.6 11" fill="none" stroke="#6c6e70" stroke-width="1.9"/></g></svg>
<div style="position:absolute;left:270.5px;width:300px;text-align:center;top:612.5px;height:20px;line-height:20px;white-space:pre;font-size:14.5px;font-weight:bold;color:#d8d8d8">R</div>
<div style="position:absolute;left:298.5px;width:300px;text-align:center;top:612.5px;height:20px;line-height:20px;white-space:pre;font-size:14.5px;font-weight:bold;color:#d8d8d8">W</div>
<svg style="position:absolute;left:469px;top:615.5px" width="44" height="14"><path d="M3.5 8.5 L11.5 6 C12 2 7 1 4.8 4 C3 6.5 3.5 11.5 7.5 11.8 C9 11.9 10.2 11.3 11 10.5" fill="none" stroke="#d8d8d8" stroke-width="2"/><circle cx="36" cy="8" r="4" fill="none" stroke="#d8d8d8" stroke-width="2"/></svg>
<div style="position:absolute;left:281px;top:636.0px;width:402px;height:1px;background:#17191c"></div>
<div style="position:absolute;left:222px;top:637.0px;width:12px;height:52.5px;background:#d55c5d"></div>
<div style="position:absolute;left:234px;top:637.0px;width:47px;height:52.5px;background:#d55c5d;border-left:1.5px solid #15171a;border-top:1.5px solid #15171a"></div>
<div style="position:absolute;left:281px;top:637.0px;width:402px;height:52.5px;background:#202326"></div>
<svg style="position:absolute;left:240px;top:644.0px" width="16" height="14"><path d="M0 7 H15 M3.5 4.5 V10 M7.5 0 V12.5 M10.2 3.5 V10.5 M12.8 5.5 V9" stroke="#180808" stroke-width="1.5" fill="none"/></svg>
<div style="position:absolute;left:-23px;width:300px;text-align:right;top:641.0px;height:20px;line-height:20px;white-space:pre;font-size:14px;color:#2a0e0e">11</div>
<div style="position:absolute;left:287px;top:640.5px;width:55px;height:20.5px;background:#26292c;border-radius:4px;border:1px solid #141618"></div>
<div style="position:absolute;left:150.2px;width:300px;text-align:center;top:641.25px;height:20px;line-height:20px;white-space:pre;font-size:15.5px;font-weight:bold;color:#cdcdcd">M</div>
<div style="position:absolute;left:178.8px;width:300px;text-align:center;top:641.25px;height:20px;line-height:20px;white-space:pre;font-size:15.5px;font-weight:bold;color:#cdcdcd">S</div>
<div style="position:absolute;left:353.5px;top:641.5px;height:20px;line-height:20px;white-space:pre;font-size:14.3px;color:#e8e8e8">HANNA ADR 2</div>
<div style="position:absolute;left:522px;top:640.5px;width:139px;height:20.5px;background:#26292c;border-radius:4px;border:1px solid #141618"></div>
<svg style="position:absolute;left:524px;top:645.0px" width="80" height="13"><path d="M1 11.4 L15.5 2 V11.4Z" fill="#cdcdcd"/><rect x="21.7" y="3.2" width="44" height="5.5" rx="1.5" fill="#c6c6c6"/><rect x="64" y="3.5" width="13" height="5" rx="2" fill="#46494c"/><circle cx="62.2" cy="5.9" r="5.3" fill="#e2e2e2" stroke="#121416" stroke-width="1.2"/></svg>
<div style="position:absolute;left:357px;width:300px;text-align:right;top:641.5px;height:20px;line-height:20px;white-space:pre;font-size:12px;color:#cdcdcd">0.00 dB</div>
<div style="position:absolute;left:350px;top:665.0px;width:53.5px;height:19.5px;background:#26292c;border-radius:4px;border:1px solid #141618"></div>
<div style="position:absolute;left:408px;top:665.0px;width:53.5px;height:19.5px;background:#26292c;border-radius:4px;border:1px solid #141618"></div>
<div style="position:absolute;left:465px;top:665.0px;width:53.5px;height:19.5px;background:#26292c;border-radius:4px;border:1px solid #141618"></div>
<svg style="position:absolute;left:355px;top:668.0px" width="44" height="14"><circle cx="8" cy="7" r="4" fill="#6c6e70"/><g transform="translate(27,0)"><path d="M1 5 H3.5 L7.3 1.5 V12.5 L3.5 9 H1Z" fill="#6c6e70"/><path d="M9.6 3 Q13.8 7 9.6 11" fill="none" stroke="#6c6e70" stroke-width="1.9"/></g></svg>
<div style="position:absolute;left:270.5px;width:300px;text-align:center;top:665.0px;height:20px;line-height:20px;white-space:pre;font-size:14.5px;font-weight:bold;color:#d8d8d8">R</div>
<div style="position:absolute;left:298.5px;width:300px;text-align:center;top:665.0px;height:20px;line-height:20px;white-space:pre;font-size:14.5px;font-weight:bold;color:#d8d8d8">W</div>
<svg style="position:absolute;left:469px;top:668.0px" width="44" height="14"><path d="M3.5 8.5 L11.5 6 C12 2 7 1 4.8 4 C3 6.5 3.5 11.5 7.5 11.8 C9 11.9 10.2 11.3 11 10.5" fill="none" stroke="#d8d8d8" stroke-width="2"/><circle cx="36" cy="8" r="4" fill="none" stroke="#d8d8d8" stroke-width="2"/></svg>
<div style="position:absolute;left:281px;top:688.5px;width:402px;height:1px;background:#17191c"></div>
<div style="position:absolute;left:222px;top:689.5px;width:12px;height:52.5px;background:#d55c5d"></div>
<div style="position:absolute;left:234px;top:689.5px;width:47px;height:52.5px;background:#d55c5d;border-left:1.5px solid #15171a;border-top:1.5px solid #15171a"></div>
<div style="position:absolute;left:281px;top:689.5px;width:402px;height:52.5px;background:#202326"></div>
<svg style="position:absolute;left:240px;top:696.5px" width="16" height="14"><path d="M0 7 H15 M3.5 4.5 V10 M7.5 0 V12.5 M10.2 3.5 V10.5 M12.8 5.5 V9" stroke="#180808" stroke-width="1.5" fill="none"/></svg>
<div style="position:absolute;left:-23px;width:300px;text-align:right;top:693.5px;height:20px;line-height:20px;white-space:pre;font-size:14px;color:#2a0e0e">12</div>
<div style="position:absolute;left:287px;top:693.0px;width:55px;height:20.5px;background:#26292c;border-radius:4px;border:1px solid #141618"></div>
<div style="position:absolute;left:150.2px;width:300px;text-align:center;top:693.75px;height:20px;line-height:20px;white-space:pre;font-size:15.5px;font-weight:bold;color:#cdcdcd">M</div>
<div style="position:absolute;left:178.8px;width:300px;text-align:center;top:693.75px;height:20px;line-height:20px;white-space:pre;font-size:15.5px;font-weight:bold;color:#cdcdcd">S</div>
<div style="position:absolute;left:353.5px;top:694.0px;height:20px;line-height:20px;white-space:pre;font-size:14.3px;color:#e8e8e8">FAIRY 1 - JOANNA</div>
<div style="position:absolute;left:522px;top:693.0px;width:139px;height:20.5px;background:#26292c;border-radius:4px;border:1px solid #141618"></div>
<svg style="position:absolute;left:524px;top:697.5px" width="80" height="13"><path d="M1 11.4 L15.5 2 V11.4Z" fill="#cdcdcd"/><rect x="21.7" y="3.2" width="44" height="5.5" rx="1.5" fill="#c6c6c6"/><rect x="64" y="3.5" width="13" height="5" rx="2" fill="#46494c"/><circle cx="62.2" cy="5.9" r="5.3" fill="#e2e2e2" stroke="#121416" stroke-width="1.2"/></svg>
<div style="position:absolute;left:357px;width:300px;text-align:right;top:694.0px;height:20px;line-height:20px;white-space:pre;font-size:12px;color:#cdcdcd">0.00 dB</div>
<div style="position:absolute;left:350px;top:717.5px;width:53.5px;height:19.5px;background:#26292c;border-radius:4px;border:1px solid #141618"></div>
<div style="position:absolute;left:408px;top:717.5px;width:53.5px;height:19.5px;background:#26292c;border-radius:4px;border:1px solid #141618"></div>
<div style="position:absolute;left:465px;top:717.5px;width:53.5px;height:19.5px;background:#26292c;border-radius:4px;border:1px solid #141618"></div>
<svg style="position:absolute;left:355px;top:720.5px" width="44" height="14"><circle cx="8" cy="7" r="4" fill="#6c6e70"/><g transform="translate(27,0)"><path d="M1 5 H3.5 L7.3 1.5 V12.5 L3.5 9 H1Z" fill="#6c6e70"/><path d="M9.6 3 Q13.8 7 9.6 11" fill="none" stroke="#6c6e70" stroke-width="1.9"/></g></svg>
<div style="position:absolute;left:270.5px;width:300px;text-align:center;top:717.5px;height:20px;line-height:20px;white-space:pre;font-size:14.5px;font-weight:bold;color:#d8d8d8">R</div>
<div style="position:absolute;left:298.5px;width:300px;text-align:center;top:717.5px;height:20px;line-height:20px;white-space:pre;font-size:14.5px;font-weight:bold;color:#d8d8d8">W</div>
<svg style="position:absolute;left:469px;top:720.5px" width="44" height="14"><path d="M3.5 8.5 L11.5 6 C12 2 7 1 4.8 4 C3 6.5 3.5 11.5 7.5 11.8 C9 11.9 10.2 11.3 11 10.5" fill="none" stroke="#d8d8d8" stroke-width="2"/><circle cx="36" cy="8" r="4" fill="none" stroke="#d8d8d8" stroke-width="2"/></svg>
<div style="position:absolute;left:281px;top:741.0px;width:402px;height:1px;background:#17191c"></div>
<div style="position:absolute;left:222px;top:742.0px;width:12px;height:52.5px;background:#d55c5d"></div>
<div style="position:absolute;left:234px;top:742.0px;width:47px;height:52.5px;background:#d55c5d;border-left:1.5px solid #15171a;border-top:1.5px solid #15171a"></div>
<div style="position:absolute;left:281px;top:742.0px;width:402px;height:52.5px;background:#202326"></div>
<svg style="position:absolute;left:240px;top:749.0px" width="16" height="14"><path d="M0 7 H15 M3.5 4.5 V10 M7.5 0 V12.5 M10.2 3.5 V10.5 M12.8 5.5 V9" stroke="#180808" stroke-width="1.5" fill="none"/></svg>
<div style="position:absolute;left:-23px;width:300px;text-align:right;top:746.0px;height:20px;line-height:20px;white-space:pre;font-size:14px;color:#2a0e0e">13</div>
<div style="position:absolute;left:287px;top:745.5px;width:55px;height:20.5px;background:#26292c;border-radius:4px;border:1px solid #141618"></div>
<div style="position:absolute;left:150.2px;width:300px;text-align:center;top:746.25px;height:20px;line-height:20px;white-space:pre;font-size:15.5px;font-weight:bold;color:#cdcdcd">M</div>
<div style="position:absolute;left:178.8px;width:300px;text-align:center;top:746.25px;height:20px;line-height:20px;white-space:pre;font-size:15.5px;font-weight:bold;color:#cdcdcd">S</div>
<div style="position:absolute;left:353.5px;top:746.5px;height:20px;line-height:20px;white-space:pre;font-size:14.3px;color:#e8e8e8">FAIRY 2 - DIANA</div>
<div style="position:absolute;left:522px;top:745.5px;width:139px;height:20.5px;background:#26292c;border-radius:4px;border:1px solid #141618"></div>
<svg style="position:absolute;left:524px;top:750.0px" width="80" height="13"><path d="M1 11.4 L15.5 2 V11.4Z" fill="#cdcdcd"/><rect x="21.7" y="3.2" width="44" height="5.5" rx="1.5" fill="#c6c6c6"/><rect x="64" y="3.5" width="13" height="5" rx="2" fill="#46494c"/><circle cx="62.2" cy="5.9" r="5.3" fill="#e2e2e2" stroke="#121416" stroke-width="1.2"/></svg>
<div style="position:absolute;left:357px;width:300px;text-align:right;top:746.5px;height:20px;line-height:20px;white-space:pre;font-size:12px;color:#cdcdcd">0.00 dB</div>
<div style="position:absolute;left:350px;top:770.0px;width:53.5px;height:19.5px;background:#26292c;border-radius:4px;border:1px solid #141618"></div>
<div style="position:absolute;left:408px;top:770.0px;width:53.5px;height:19.5px;background:#26292c;border-radius:4px;border:1px solid #141618"></div>
<div style="position:absolute;left:465px;top:770.0px;width:53.5px;height:19.5px;background:#26292c;border-radius:4px;border:1px solid #141618"></div>
<svg style="position:absolute;left:355px;top:773.0px" width="44" height="14"><circle cx="8" cy="7" r="4" fill="#6c6e70"/><g transform="translate(27,0)"><path d="M1 5 H3.5 L7.3 1.5 V12.5 L3.5 9 H1Z" fill="#6c6e70"/><path d="M9.6 3 Q13.8 7 9.6 11" fill="none" stroke="#6c6e70" stroke-width="1.9"/></g></svg>
<div style="position:absolute;left:270.5px;width:300px;text-align:center;top:770.0px;height:20px;line-height:20px;white-space:pre;font-size:14.5px;font-weight:bold;color:#d8d8d8">R</div>
<div style="position:absolute;left:298.5px;width:300px;text-align:center;top:770.0px;height:20px;line-height:20px;white-space:pre;font-size:14.5px;font-weight:bold;color:#d8d8d8">W</div>
<svg style="position:absolute;left:469px;top:773.0px" width="44" height="14"><path d="M3.5 8.5 L11.5 6 C12 2 7 1 4.8 4 C3 6.5 3.5 11.5 7.5 11.8 C9 11.9 10.2 11.3 11 10.5" fill="none" stroke="#d8d8d8" stroke-width="2"/><circle cx="36" cy="8" r="4" fill="none" stroke="#d8d8d8" stroke-width="2"/></svg>
<div style="position:absolute;left:281px;top:793.5px;width:402px;height:1px;background:#17191c"></div>
<div style="position:absolute;left:222px;top:794.5px;width:12px;height:52.5px;background:#d55c5d"></div>
<div style="position:absolute;left:234px;top:794.5px;width:47px;height:52.5px;background:#d55c5d;border-left:1.5px solid #15171a;border-top:1.5px solid #15171a"></div>
<div style="position:absolute;left:281px;top:794.5px;width:402px;height:52.5px;background:#202326"></div>
<svg style="position:absolute;left:240px;top:801.5px" width="16" height="14"><path d="M0 7 H15 M3.5 4.5 V10 M7.5 0 V12.5 M10.2 3.5 V10.5 M12.8 5.5 V9" stroke="#180808" stroke-width="1.5" fill="none"/></svg>
<div style="position:absolute;left:-23px;width:300px;text-align:right;top:798.5px;height:20px;line-height:20px;white-space:pre;font-size:14px;color:#2a0e0e">14</div>
<div style="position:absolute;left:287px;top:798.0px;width:55px;height:20.5px;background:#26292c;border-radius:4px;border:1px solid #141618"></div>
<div style="position:absolute;left:150.2px;width:300px;text-align:center;top:798.75px;height:20px;line-height:20px;white-space:pre;font-size:15.5px;font-weight:bold;color:#cdcdcd">M</div>
<div style="position:absolute;left:178.8px;width:300px;text-align:center;top:798.75px;height:20px;line-height:20px;white-space:pre;font-size:15.5px;font-weight:bold;color:#cdcdcd">S</div>
<div style="position:absolute;left:353.5px;top:799.0px;height:20px;line-height:20px;white-space:pre;font-size:14.3px;color:#e8e8e8">FAIRY 3 - MARY</div>
<div style="position:absolute;left:522px;top:798.0px;width:139px;height:20.5px;background:#26292c;border-radius:4px;border:1px solid #141618"></div>
<svg style="position:absolute;left:524px;top:802.5px" width="80" height="13"><path d="M1 11.4 L15.5 2 V11.4Z" fill="#cdcdcd"/><rect x="21.7" y="3.2" width="44" height="5.5" rx="1.5" fill="#c6c6c6"/><rect x="64" y="3.5" width="13" height="5" rx="2" fill="#46494c"/><circle cx="62.2" cy="5.9" r="5.3" fill="#e2e2e2" stroke="#121416" stroke-width="1.2"/></svg>
<div style="position:absolute;left:357px;width:300px;text-align:right;top:799.0px;height:20px;line-height:20px;white-space:pre;font-size:12px;color:#cdcdcd">0.00 dB</div>
<div style="position:absolute;left:350px;top:822.5px;width:53.5px;height:19.5px;background:#26292c;border-radius:4px;border:1px solid #141618"></div>
<div style="position:absolute;left:408px;top:822.5px;width:53.5px;height:19.5px;background:#26292c;border-radius:4px;border:1px solid #141618"></div>
<div style="position:absolute;left:465px;top:822.5px;width:53.5px;height:19.5px;background:#26292c;border-radius:4px;border:1px solid #141618"></div>
<svg style="position:absolute;left:355px;top:825.5px" width="44" height="14"><circle cx="8" cy="7" r="4" fill="#6c6e70"/><g transform="translate(27,0)"><path d="M1 5 H3.5 L7.3 1.5 V12.5 L3.5 9 H1Z" fill="#6c6e70"/><path d="M9.6 3 Q13.8 7 9.6 11" fill="none" stroke="#6c6e70" stroke-width="1.9"/></g></svg>
<div style="position:absolute;left:270.5px;width:300px;text-align:center;top:822.5px;height:20px;line-height:20px;white-space:pre;font-size:14.5px;font-weight:bold;color:#d8d8d8">R</div>
<div style="position:absolute;left:298.5px;width:300px;text-align:center;top:822.5px;height:20px;line-height:20px;white-space:pre;font-size:14.5px;font-weight:bold;color:#d8d8d8">W</div>
<svg style="position:absolute;left:469px;top:825.5px" width="44" height="14"><path d="M3.5 8.5 L11.5 6 C12 2 7 1 4.8 4 C3 6.5 3.5 11.5 7.5 11.8 C9 11.9 10.2 11.3 11 10.5" fill="none" stroke="#d8d8d8" stroke-width="2"/><circle cx="36" cy="8" r="4" fill="none" stroke="#d8d8d8" stroke-width="2"/></svg>
<div style="position:absolute;left:281px;top:846.0px;width:402px;height:1px;background:#17191c"></div>
<div style="position:absolute;left:222px;top:847.0px;width:12px;height:52.5px;background:#d55c5d"></div>
<div style="position:absolute;left:234px;top:847.0px;width:47px;height:52.5px;background:#d55c5d;border-left:1.5px solid #15171a;border-top:1.5px solid #15171a"></div>
<div style="position:absolute;left:281px;top:847.0px;width:402px;height:52.5px;background:#202326"></div>
<svg style="position:absolute;left:240px;top:854.0px" width="16" height="14"><path d="M0 7 H15 M3.5 4.5 V10 M7.5 0 V12.5 M10.2 3.5 V10.5 M12.8 5.5 V9" stroke="#180808" stroke-width="1.5" fill="none"/></svg>
<div style="position:absolute;left:-23px;width:300px;text-align:right;top:851.0px;height:20px;line-height:20px;white-space:pre;font-size:14px;color:#2a0e0e">15</div>
<div style="position:absolute;left:287px;top:850.5px;width:55px;height:20.5px;background:#26292c;border-radius:4px;border:1px solid #141618"></div>
<div style="position:absolute;left:150.2px;width:300px;text-align:center;top:851.25px;height:20px;line-height:20px;white-space:pre;font-size:15.5px;font-weight:bold;color:#cdcdcd">M</div>
<div style="position:absolute;left:178.8px;width:300px;text-align:center;top:851.25px;height:20px;line-height:20px;white-space:pre;font-size:15.5px;font-weight:bold;color:#cdcdcd">S</div>
<div style="position:absolute;left:353.5px;top:851.5px;height:20px;line-height:20px;white-space:pre;font-size:14.3px;color:#e8e8e8">FAIRY 4 - ADA</div>
<div style="position:absolute;left:522px;top:850.5px;width:139px;height:20.5px;background:#26292c;border-radius:4px;border:1px solid #141618"></div>
<svg style="position:absolute;left:524px;top:855.0px" width="80" height="13"><path d="M1 11.4 L15.5 2 V11.4Z" fill="#cdcdcd"/><rect x="21.7" y="3.2" width="44" height="5.5" rx="1.5" fill="#c6c6c6"/><rect x="64" y="3.5" width="13" height="5" rx="2" fill="#46494c"/><circle cx="62.2" cy="5.9" r="5.3" fill="#e2e2e2" stroke="#121416" stroke-width="1.2"/></svg>
<div style="position:absolute;left:357px;width:300px;text-align:right;top:851.5px;height:20px;line-height:20px;white-space:pre;font-size:12px;color:#cdcdcd">0.00 dB</div>
<div style="position:absolute;left:350px;top:875.0px;width:53.5px;height:19.5px;background:#26292c;border-radius:4px;border:1px solid #141618"></div>
<div style="position:absolute;left:408px;top:875.0px;width:53.5px;height:19.5px;background:#26292c;border-radius:4px;border:1px solid #141618"></div>
<div style="position:absolute;left:465px;top:875.0px;width:53.5px;height:19.5px;background:#26292c;border-radius:4px;border:1px solid #141618"></div>
<svg style="position:absolute;left:355px;top:878.0px" width="44" height="14"><circle cx="8" cy="7" r="4" fill="#6c6e70"/><g transform="translate(27,0)"><path d="M1 5 H3.5 L7.3 1.5 V12.5 L3.5 9 H1Z" fill="#6c6e70"/><path d="M9.6 3 Q13.8 7 9.6 11" fill="none" stroke="#6c6e70" stroke-width="1.9"/></g></svg>
<div style="position:absolute;left:270.5px;width:300px;text-align:center;top:875.0px;height:20px;line-height:20px;white-space:pre;font-size:14.5px;font-weight:bold;color:#d8d8d8">R</div>
<div style="position:absolute;left:298.5px;width:300px;text-align:center;top:875.0px;height:20px;line-height:20px;white-space:pre;font-size:14.5px;font-weight:bold;color:#d8d8d8">W</div>
<svg style="position:absolute;left:469px;top:878.0px" width="44" height="14"><path d="M3.5 8.5 L11.5 6 C12 2 7 1 4.8 4 C3 6.5 3.5 11.5 7.5 11.8 C9 11.9 10.2 11.3 11 10.5" fill="none" stroke="#d8d8d8" stroke-width="2"/><circle cx="36" cy="8" r="4" fill="none" stroke="#d8d8d8" stroke-width="2"/></svg>
<div style="position:absolute;left:281px;top:898.5px;width:402px;height:1px;background:#17191c"></div>
<div style="position:absolute;left:222px;top:900px;width:46px;height:51px;background:#135a20"></div>
<div style="position:absolute;left:268px;top:900px;width:415px;height:51px;background:#1f2225"></div>
<svg style="position:absolute;left:226px;top:905px" width="20" height="15"><path d="M1 2.5 H6 L7.5 4 H14 V6 H5 L1 13Z" fill="#e6e6e6"/><path d="M1 13 L4.5 6 H18.5 L15 13Z" fill="#e6e6e6"/><rect x="1.5" y="0.5" width="4" height="1.3" fill="#e6e6e6"/></svg>
<div style="position:absolute;left:275px;top:903px;width:55px;height:19.5px;background:#26292c;border-radius:4px;border:1px solid #141618"></div>
<div style="position:absolute;left:138.2px;width:300px;text-align:center;top:903.25px;height:20px;line-height:20px;white-space:pre;font-size:15.5px;font-weight:bold;color:#cdcdcd">M</div>
<div style="position:absolute;left:166.8px;width:300px;text-align:center;top:903.25px;height:20px;line-height:20px;white-space:pre;font-size:15.5px;font-weight:bold;color:#cdcdcd">S</div>
<div style="position:absolute;left:341.5px;top:903.5px;height:20px;line-height:20px;white-space:pre;font-size:14.3px;color:#e4e4e4">FOLEY</div>
<div style="position:absolute;left:510px;top:903px;width:52.5px;height:19.5px;background:#26292c;border-radius:4px;border:1px solid #141618"></div>
<svg style="position:absolute;left:515px;top:906px" width="42" height="14"><circle cx="7" cy="7" r="4.5" fill="#d4d4d4"/><g transform="translate(27.5,0)"><path d="M1 5 H3.5 L7.3 1.5 V12.5 L3.5 9 H1Z" fill="#d4d4d4"/><path d="M9.6 3 Q13.8 7 9.6 11" fill="none" stroke="#d4d4d4" stroke-width="1.9"/></g></svg>
<div style="position:absolute;left:339px;top:927px;width:52.5px;height:19.5px;background:#26292c;border-radius:4px;border:1px solid #141618"></div>
<svg style="position:absolute;left:344px;top:930px" width="42" height="14"><path d="M1 5 H13 M1 9 H13" stroke="#cfcfcf" stroke-width="2"/><path d="M29.5 2.5 C30.8 6.5 32.5 6.5 34 3.2 C35.5 0 37.5 0.5 39.5 3.8 M29.5 8.5 C30.8 12.5 32.5 12.5 34 9.2 C35.5 6 37.5 6.5 39.5 9.8" fill="none" stroke="#c4c6c8" stroke-width="1.7"/></svg>
<div style="position:absolute;left:222px;top:951px;width:461px;height:1.5px;background:#16181b"></div>
<div style="position:absolute;left:222px;top:952px;width:12px;height:52.5px;background:#135a20"></div>
<div style="position:absolute;left:234px;top:952px;width:47px;height:52.5px;background:#22a845;border-left:1.5px solid #15171a;border-top:1.5px solid #15171a"></div>
<div style="position:absolute;left:281px;top:952px;width:402px;height:52.5px;background:#202326"></div>
<svg style="position:absolute;left:240px;top:959px" width="16" height="14"><path d="M0 7 H15 M3.5 4.5 V10 M7.5 0 V12.5 M10.2 3.5 V10.5 M12.8 5.5 V9" stroke="#180808" stroke-width="1.5" fill="none"/></svg>
<div style="position:absolute;left:-23px;width:300px;text-align:right;top:956px;height:20px;line-height:20px;white-space:pre;font-size:14px;color:#2a0e0e">16</div>
<div style="position:absolute;left:287px;top:955.5px;width:55px;height:20.5px;background:#26292c;border-radius:4px;border:1px solid #141618"></div>
<div style="position:absolute;left:150.2px;width:300px;text-align:center;top:956.25px;height:20px;line-height:20px;white-space:pre;font-size:15.5px;font-weight:bold;color:#cdcdcd">M</div>
<div style="position:absolute;left:178.8px;width:300px;text-align:center;top:956.25px;height:20px;line-height:20px;white-space:pre;font-size:15.5px;font-weight:bold;color:#cdcdcd">S</div>
<div style="position:absolute;left:353.5px;top:956.5px;height:20px;line-height:20px;white-space:pre;font-size:14.3px;color:#e8e8e8">1FS</div>
<div style="position:absolute;left:522px;top:955.5px;width:139px;height:20.5px;background:#26292c;border-radius:4px;border:1px solid #141618"></div>
<svg style="position:absolute;left:524px;top:960px" width="80" height="13"><path d="M1 11.4 L15.5 2 V11.4Z" fill="#cdcdcd"/><rect x="21.7" y="3.2" width="44" height="5.5" rx="1.5" fill="#c6c6c6"/><rect x="64" y="3.5" width="13" height="5" rx="2" fill="#46494c"/><circle cx="62.2" cy="5.9" r="5.3" fill="#e2e2e2" stroke="#121416" stroke-width="1.2"/></svg>
<div style="position:absolute;left:357px;width:300px;text-align:right;top:956.5px;height:20px;line-height:20px;white-space:pre;font-size:12px;color:#cdcdcd">0.00 dB</div>
<div style="position:absolute;left:350px;top:980px;width:53.5px;height:19.5px;background:#26292c;border-radius:4px;border:1px solid #141618"></div>
<div style="position:absolute;left:408px;top:980px;width:53.5px;height:19.5px;background:#26292c;border-radius:4px;border:1px solid #141618"></div>
<div style="position:absolute;left:465px;top:980px;width:53.5px;height:19.5px;background:#26292c;border-radius:4px;border:1px solid #141618"></div>
<svg style="position:absolute;left:355px;top:983px" width="44" height="14"><circle cx="8" cy="7" r="4" fill="#6c6e70"/><g transform="translate(27,0)"><path d="M1 5 H3.5 L7.3 1.5 V12.5 L3.5 9 H1Z" fill="#6c6e70"/><path d="M9.6 3 Q13.8 7 9.6 11" fill="none" stroke="#6c6e70" stroke-width="1.9"/></g></svg>
<div style="position:absolute;left:409px;top:981px;width:25px;height:18px;background:#17c21a;border-radius:3px 0 0 3px"></div>
<div style="position:absolute;left:270.5px;width:300px;text-align:center;top:980px;height:20px;line-height:20px;white-space:pre;font-size:14.5px;font-weight:bold;color:#102010">R</div>
<div style="position:absolute;left:298.5px;width:300px;text-align:center;top:980px;height:20px;line-height:20px;white-space:pre;font-size:14.5px;font-weight:bold;color:#d8d8d8">W</div>
<svg style="position:absolute;left:469px;top:983px" width="44" height="14"><path d="M3.5 8.5 L11.5 6 C12 2 7 1 4.8 4 C3 6.5 3.5 11.5 7.5 11.8 C9 11.9 10.2 11.3 11 10.5" fill="none" stroke="#d8d8d8" stroke-width="2"/><circle cx="36" cy="8" r="4" fill="none" stroke="#d8d8d8" stroke-width="2"/></svg>
<div style="position:absolute;left:281px;top:1003.5px;width:402px;height:1px;background:#17191c"></div>
<div style="position:absolute;left:699.5px;top:86px;width:1220.5px;height:914px;background:#1d1f22"></div>
<div style="position:absolute;left:699.5px;top:118px;width:9.5px;height:882px;background:#26292c"></div>
<div style="position:absolute;left:709px;top:92px;width:1187px;height:29.5px;background:#59595b"></div>
<svg style="position:absolute;left:709px;top:92px" width="12" height="12"><path d="M0 0 H12 L0 12Z" fill="#f2f2f2"/></svg>
<div style="position:absolute;left:708.75px;top:92px;width:1.5px;height:29.5px;background:#d2d2d2"></div>
<div style="position:absolute;left:714.5px;top:101.5px;height:20px;line-height:20px;white-space:pre;font-size:15px;font-weight:bold;color:#f4f4f4">1</div>
<div style="position:absolute;left:818.398px;top:92px;width:1.5px;height:29.5px;background:#d2d2d2"></div>
<div style="position:absolute;left:824.148px;top:101.5px;height:20px;line-height:20px;white-space:pre;font-size:15px;font-weight:bold;color:#f4f4f4">9</div>
<div style="position:absolute;left:928.046px;top:92px;width:1.5px;height:29.5px;background:#d2d2d2"></div>
<div style="position:absolute;left:933.796px;top:101.5px;height:20px;line-height:20px;white-space:pre;font-size:15px;font-weight:bold;color:#f4f4f4">17</div>
<div style="position:absolute;left:1037.694px;top:92px;width:1.5px;height:29.5px;background:#d2d2d2"></div>
<div style="position:absolute;left:1043.444px;top:101.5px;height:20px;line-height:20px;white-space:pre;font-size:15px;font-weight:bold;color:#f4f4f4">25</div>
<div style="position:absolute;left:1147.342px;top:92px;width:1.5px;height:29.5px;background:#d2d2d2"></div>
<div style="position:absolute;left:1153.092px;top:101.5px;height:20px;line-height:20px;white-space:pre;font-size:15px;font-weight:bold;color:#f4f4f4">33</div>
<div style="position:absolute;left:1256.99px;top:92px;width:1.5px;height:29.5px;background:#d2d2d2"></div>
<div style="position:absolute;left:1262.74px;top:101.5px;height:20px;line-height:20px;white-space:pre;font-size:15px;font-weight:bold;color:#f4f4f4">41</div>
<div style="position:absolute;left:1366.638px;top:92px;width:1.5px;height:29.5px;background:#d2d2d2"></div>
<div style="position:absolute;left:1372.388px;top:101.5px;height:20px;line-height:20px;white-space:pre;font-size:15px;font-weight:bold;color:#f4f4f4">49</div>
<div style="position:absolute;left:1476.286px;top:92px;width:1.5px;height:29.5px;background:#d2d2d2"></div>
<div style="position:absolute;left:1482.036px;top:101.5px;height:20px;line-height:20px;white-space:pre;font-size:15px;font-weight:bold;color:#f4f4f4">57</div>
<div style="position:absolute;left:1585.934px;top:92px;width:1.5px;height:29.5px;background:#d2d2d2"></div>
<div style="position:absolute;left:1591.684px;top:101.5px;height:20px;line-height:20px;white-space:pre;font-size:15px;font-weight:bold;color:#f4f4f4">65</div>
<div style="position:absolute;left:1695.5819999999999px;top:92px;width:1.5px;height:29.5px;background:#d2d2d2"></div>
<div style="position:absolute;left:1701.3319999999999px;top:101.5px;height:20px;line-height:20px;white-space:pre;font-size:15px;font-weight:bold;color:#f4f4f4">73</div>
<div style="position:absolute;left:1805.23px;top:92px;width:1.5px;height:29.5px;background:#d2d2d2"></div>
<div style="position:absolute;left:1810.98px;top:101.5px;height:20px;line-height:20px;white-space:pre;font-size:15px;font-weight:bold;color:#f4f4f4">81</div>
<div style="position:absolute;left:709px;top:122.5px;width:1187.5px;height:23px;background:#d6d6d6"></div>
<div style="position:absolute;left:711.8px;top:124px;width:33.6px;height:20px;background:radial-gradient(ellipse at 50% 40%, #030303 0%, #030303 110%)"></div>
<div style="position:absolute;left:746.7px;top:124px;width:1.6px;height:20px;background:#050505"></div>
<div style="position:absolute;left:749.5px;top:124px;width:33.6px;height:20px;background:radial-gradient(ellipse 28% 40% at 55% 55%, #2a1a08 0%, transparent 100%),radial-gradient(ellipse at 50% 40%, #060504 0%, #030303 110%)"></div>
<div style="position:absolute;left:784.4px;top:124px;width:1.6px;height:20px;background:#050505"></div>
<div style="position:absolute;left:787.2px;top:124px;width:33.6px;height:20px;background:radial-gradient(ellipse 28% 40% at 55% 55%, #2a2620 0%, transparent 100%),linear-gradient(180deg, transparent 0%, #6a7a78 12%, transparent 42%),radial-gradient(ellipse at 50% 40%, #101414 0%, #030303 110%)"></div>
<div style="position:absolute;left:822.1px;top:124px;width:1.6px;height:20px;background:#050505"></div>
<div style="position:absolute;left:824.9px;top:124px;width:33.6px;height:20px;background:radial-gradient(ellipse 28% 40% at 55% 55%, #3a3428 0%, transparent 100%),linear-gradient(180deg, transparent 0%, #7a8480 12%, transparent 42%),radial-gradient(ellipse at 50% 40%, #121616 0%, #030303 110%)"></div>
<div style="position:absolute;left:859.8px;top:124px;width:1.6px;height:20px;background:#050505"></div>
<div style="position:absolute;left:862.6px;top:124px;width:33.6px;height:20px;background:radial-gradient(ellipse 28% 40% at 55% 55%, #6a6040 0%, transparent 100%),linear-gradient(180deg, transparent 0%, #8a9a90 12%, transparent 42%),radial-gradient(ellipse at 50% 40%, #1c1c14 0%, #030303 110%)"></div>
<div style="position:absolute;left:897.5px;top:124px;width:1.6px;height:20px;background:#050505"></div>
<div style="position:absolute;left:900.3px;top:124px;width:33.6px;height:20px;background:radial-gradient(ellipse 28% 40% at 55% 55%, #6a6444 0%, transparent 100%),linear-gradient(180deg, transparent 0%, #8aa0a0 12%, transparent 42%),radial-gradient(ellipse at 50% 40%, #1e1e14 0%, #030303 110%)"></div>
<div style="position:absolute;left:935.2px;top:124px;width:1.6px;height:20px;background:#050505"></div>
<div style="position:absolute;left:938.0px;top:124px;width:33.6px;height:20px;background:radial-gradient(ellipse 28% 40% at 55% 55%, #6a5c3a 0%, transparent 100%),linear-gradient(180deg, transparent 0%, #8a9080 12%, transparent 42%),radial-gradient(ellipse at 50% 40%, #1c1a12 0%, #030303 110%)"></div>
<div style="position:absolute;left:972.9px;top:124px;width:1.6px;height:20px;background:#050505"></div>
<div style="position:absolute;left:975.7px;top:124px;width:33.6px;height:20px;background:radial-gradient(ellipse 28% 40% at 55% 55%, #4a4a2a 0%, transparent 100%),linear-gradient(180deg, transparent 0%, #5a6040 12%, transparent 42%),radial-gradient(ellipse at 50% 40%, #141810 0%, #030303 110%)"></div>
<div style="position:absolute;left:1010.6px;top:124px;width:1.6px;height:20px;background:#050505"></div>
<div style="position:absolute;left:1013.4px;top:124px;width:33.6px;height:20px;background:radial-gradient(ellipse 28% 40% at 55% 55%, #6a5a40 0%, transparent 100%),linear-gradient(180deg, transparent 0%, #60a0b0 12%, transparent 42%),radial-gradient(ellipse at 50% 40%, #1a1a14 0%, #030303 110%)"></div>
<div style="position:absolute;left:1048.3px;top:124px;width:1.6px;height:20px;background:#050505"></div>
<div style="position:absolute;left:1051.1px;top:124px;width:33.6px;height:20px;background:radial-gradient(ellipse 28% 40% at 55% 55%, #6a5a40 0%, transparent 100%),linear-gradient(180deg, transparent 0%, #7a7060 12%, transparent 42%),radial-gradient(ellipse at 50% 40%, #1e1a12 0%, #030303 110%)"></div>
<div style="position:absolute;left:1086.0px;top:124px;width:1.6px;height:20px;background:#050505"></div>
<div style="position:absolute;left:1088.8px;top:124px;width:33.6px;height:20px;background:radial-gradient(ellipse 28% 40% at 55% 55%, #a0a090 0%, transparent 100%),linear-gradient(180deg, transparent 0%, #5a6a50 12%, transparent 42%),radial-gradient(ellipse at 50% 40%, #121810 0%, #030303 110%)"></div>
<div style="position:absolute;left:1123.7px;top:124px;width:1.6px;height:20px;background:#050505"></div>
<div style="position:absolute;left:1126.5px;top:124px;width:33.6px;height:20px;background:radial-gradient(ellipse 28% 40% at 55% 55%, #6a6040 0%, transparent 100%),linear-gradient(180deg, transparent 0%, #5a5a40 12%, transparent 42%),radial-gradient(ellipse at 50% 40%, #181810 0%, #030303 110%)"></div>
<div style="position:absolute;left:1161.4px;top:124px;width:1.6px;height:20px;background:#050505"></div>
<div style="position:absolute;left:1164.2px;top:124px;width:33.6px;height:20px;background:radial-gradient(ellipse at 50% 40%, #030303 0%, #030303 110%)"></div>
<div style="position:absolute;left:1199.1px;top:124px;width:1.6px;height:20px;background:#050505"></div>
<div style="position:absolute;left:1201.9px;top:124px;width:33.6px;height:20px;background:radial-gradient(ellipse 28% 40% at 55% 55%, #1a0a0a 0%, transparent 100%),radial-gradient(ellipse at 50% 40%, #050303 0%, #030303 110%)"></div>
<div style="position:absolute;left:1236.8px;top:124px;width:1.6px;height:20px;background:#050505"></div>
<div style="position:absolute;left:1239.6px;top:124px;width:33.6px;height:20px;background:radial-gradient(ellipse 28% 40% at 55% 55%, #2a5a6a 0%, transparent 100%),linear-gradient(180deg, transparent 0%, #3a8aa0 12%, transparent 42%),radial-gradient(ellipse at 50% 40%, #0a1a20 0%, #030303 110%)"></div>
<div style="position:absolute;left:1274.5px;top:124px;width:1.6px;height:20px;background:#050505"></div>
<div style="position:absolute;left:1277.3px;top:124px;width:33.6px;height:20px;background:radial-gradient(ellipse 28% 40% at 55% 55%, #2a6a80 0%, transparent 100%),linear-gradient(180deg, transparent 0%, #3a8aa8 12%, transparent 42%),radial-gradient(ellipse at 50% 40%, #0c1e28 0%, #030303 110%)"></div>
<div style="position:absolute;left:1312.2px;top:124px;width:1.6px;height:20px;background:#050505"></div>
<div style="position:absolute;left:1315.0px;top:124px;width:33.6px;height:20px;background:radial-gradient(ellipse 28% 40% at 55% 55%, #a0c0c8 0%, transparent 100%),linear-gradient(180deg, transparent 0%, #4a8a98 12%, transparent 42%),radial-gradient(ellipse at 50% 40%, #0c1e24 0%, #030303 110%)"></div>
<div style="position:absolute;left:1349.9px;top:124px;width:1.6px;height:20px;background:#050505"></div>
<div style="position:absolute;left:1352.7px;top:124px;width:33.6px;height:20px;background:radial-gradient(ellipse 28% 40% at 55% 55%, #5a9aaa 0%, transparent 100%),radial-gradient(ellipse at 50% 40%, #060c10 0%, #030303 110%)"></div>
<div style="position:absolute;left:1387.6px;top:124px;width:1.6px;height:20px;background:#050505"></div>
<div style="position:absolute;left:1390.4px;top:124px;width:33.6px;height:20px;background:radial-gradient(ellipse 28% 40% at 55% 55%, #c09070 0%, transparent 100%),linear-gradient(180deg, transparent 0%, #6a4a30 12%, transparent 42%),radial-gradient(ellipse at 50% 40%, #20140c 0%, #030303 110%)"></div>
<div style="position:absolute;left:1425.3px;top:124px;width:1.6px;height:20px;background:#050505"></div>
<div style="position:absolute;left:1428.1px;top:124px;width:33.6px;height:20px;background:radial-gradient(ellipse 28% 40% at 55% 55%, #7aa0a8 0%, transparent 100%),linear-gradient(180deg, transparent 0%, #3a7a8a 12%, transparent 42%),radial-gradient(ellipse at 50% 40%, #0a161c 0%, #030303 110%)"></div>
<div style="position:absolute;left:1463.0px;top:124px;width:1.6px;height:20px;background:#050505"></div>
<div style="position:absolute;left:1465.8px;top:124px;width:33.6px;height:20px;background:radial-gradient(ellipse 28% 40% at 55% 55%, #9ab8c0 0%, transparent 100%),linear-gradient(180deg, transparent 0%, #4a8a9a 12%, transparent 42%),radial-gradient(ellipse at 50% 40%, #0c1c22 0%, #030303 110%)"></div>
<div style="position:absolute;left:1500.7px;top:124px;width:1.6px;height:20px;background:#050505"></div>
<div style="position:absolute;left:1503.5px;top:124px;width:33.6px;height:20px;background:radial-gradient(ellipse 28% 40% at 55% 55%, #a0c0c8 0%, transparent 100%),linear-gradient(180deg, transparent 0%, #4a8a98 12%, transparent 42%),radial-gradient(ellipse at 50% 40%, #0c1a20 0%, #030303 110%)"></div>
<div style="position:absolute;left:1538.4px;top:124px;width:1.6px;height:20px;background:#050505"></div>
<div style="position:absolute;left:1541.2px;top:124px;width:33.6px;height:20px;background:radial-gradient(ellipse 28% 40% at 55% 55%, #5a8a9a 0%, transparent 100%),radial-gradient(ellipse at 50% 40%, #060e12 0%, #030303 110%)"></div>
<div style="position:absolute;left:1576.1px;top:124px;width:1.6px;height:20px;background:#050505"></div>
<div style="position:absolute;left:1578.9px;top:124px;width:33.6px;height:20px;background:radial-gradient(ellipse 28% 40% at 55% 55%, #6a98a8 0%, transparent 100%),linear-gradient(180deg, transparent 0%, #3a7080 12%, transparent 42%),radial-gradient(ellipse at 50% 40%, #0a161c 0%, #030303 110%)"></div>
<div style="position:absolute;left:1613.8px;top:124px;width:1.6px;height:20px;background:#050505"></div>
<div style="position:absolute;left:1616.6px;top:124px;width:33.6px;height:20px;background:radial-gradient(ellipse 28% 40% at 55% 55%, #90b8c0 0%, transparent 100%),linear-gradient(180deg, transparent 0%, #4a8a90 12%, transparent 42%),radial-gradient(ellipse at 50% 40%, #0c1c20 0%, #030303 110%)"></div>
<div style="position:absolute;left:1651.5px;top:124px;width:1.6px;height:20px;background:#050505"></div>
<div style="position:absolute;left:1654.3px;top:124px;width:33.6px;height:20px;background:radial-gradient(ellipse 28% 40% at 55% 55%, #5a8a9a 0%, transparent 100%),linear-gradient(180deg, transparent 0%, #3a6a80 12%, transparent 42%),radial-gradient(ellipse at 50% 40%, #0a161e 0%, #030303 110%)"></div>
<div style="position:absolute;left:1689.2px;top:124px;width:1.6px;height:20px;background:#050505"></div>
<div style="position:absolute;left:1692.0px;top:124px;width:33.6px;height:20px;background:radial-gradient(ellipse 28% 40% at 55% 55%, #9ac0c8 0%, transparent 100%),linear-gradient(180deg, transparent 0%, #4a8a98 12%, transparent 42%),radial-gradient(ellipse at 50% 40%, #0c1a20 0%, #030303 110%)"></div>
<div style="position:absolute;left:1726.9px;top:124px;width:1.6px;height:20px;background:#050505"></div>
<div style="position:absolute;left:1729.7px;top:124px;width:33.6px;height:20px;background:radial-gradient(ellipse 28% 40% at 55% 55%, #c0e0f0 0%, transparent 100%),linear-gradient(180deg, transparent 0%, #3a7a9a 12%, transparent 42%),radial-gradient(ellipse at 50% 40%, #0e2a3a 0%, #030303 110%)"></div>
<div style="position:absolute;left:1764.6px;top:124px;width:1.6px;height:20px;background:#050505"></div>
<div style="position:absolute;left:1767.4px;top:124px;width:33.6px;height:20px;background:radial-gradient(ellipse 28% 40% at 55% 55%, #f8e0c8 0%, transparent 100%),linear-gradient(180deg, transparent 0%, #f0d0b0 12%, transparent 42%),radial-gradient(ellipse at 50% 40%, #a87050 0%, #030303 110%)"></div>
<div style="position:absolute;left:1802.3px;top:124px;width:1.6px;height:20px;background:#050505"></div>
<div style="position:absolute;left:1805.1px;top:124px;width:33.6px;height:20px;background:radial-gradient(ellipse 28% 40% at 55% 55%, #1a3434 0%, transparent 100%),linear-gradient(180deg, transparent 0%, #1a3030 12%, transparent 42%),radial-gradient(ellipse at 50% 40%, #081010 0%, #030303 110%)"></div>
<div style="position:absolute;left:1840.0px;top:124px;width:1.6px;height:20px;background:#050505"></div>
<div style="position:absolute;left:1842.8px;top:124px;width:33.6px;height:20px;background:radial-gradient(ellipse 28% 40% at 55% 55%, #1a3020 0%, transparent 100%),linear-gradient(180deg, transparent 0%, #1a301a 12%, transparent 42%),radial-gradient(ellipse at 50% 40%, #081208 0%, #030303 110%)"></div>
<div style="position:absolute;left:1877.7px;top:124px;width:1.6px;height:20px;background:#050505"></div>
<div style="position:absolute;left:1880.5px;top:124px;width:14.7px;height:20px;background:radial-gradient(ellipse 28% 40% at 55% 55%, #1a2e2e 0%, transparent 100%),linear-gradient(180deg, transparent 0%, #1a2a2a 12%, transparent 42%),radial-gradient(ellipse at 50% 40%, #060e0e 0%, #030303 110%)"></div>
<div style="position:absolute;left:709px;top:146.5px;width:1191px;height:2px;background:#6e7072"></div>
<div style="position:absolute;left:1293px;top:146px;width:25px;height:3px;background:repeating-linear-gradient(90deg,#fff 0 4px,transparent 4px 7px)"></div>
<div style="position:absolute;left:709px;top:149px;width:1189px;height:851px;background:#444547"></div>
<div style="position:absolute;left:699.5px;top:170.5px;width:1198.5px;height:1.3px;background:#5f6062"></div>
<div style="position:absolute;left:699.5px;top:374.5px;width:1198.5px;height:1.3px;background:#5f6062"></div>
<div style="position:absolute;left:699.5px;top:426.5px;width:1198.5px;height:1.3px;background:#5f6062"></div>
<div style="position:absolute;left:699.5px;top:479.0px;width:1198.5px;height:1.3px;background:#5f6062"></div>
<div style="position:absolute;left:699.5px;top:531.5px;width:1198.5px;height:1.3px;background:#5f6062"></div>
<div style="position:absolute;left:699.5px;top:584.0px;width:1198.5px;height:1.3px;background:#5f6062"></div>
<div style="position:absolute;left:699.5px;top:636.5px;width:1198.5px;height:1.3px;background:#5f6062"></div>
<div style="position:absolute;left:699.5px;top:689.0px;width:1198.5px;height:1.3px;background:#5f6062"></div>
<div style="position:absolute;left:699.5px;top:741.5px;width:1198.5px;height:1.3px;background:#5f6062"></div>
<div style="position:absolute;left:699.5px;top:794.0px;width:1198.5px;height:1.3px;background:#5f6062"></div>
<div style="position:absolute;left:699.5px;top:846.5px;width:1198.5px;height:1.3px;background:#5f6062"></div>
<div style="position:absolute;left:699.5px;top:899.0px;width:1198.5px;height:1.3px;background:#5f6062"></div>
<div style="position:absolute;left:699.5px;top:951.5px;width:1198.5px;height:1.3px;background:#5f6062"></div>
<div style="position:absolute;left:708.9px;top:149px;width:1.3px;height:851px;background:#7b7c7e"></div>
<div style="position:absolute;left:818.548px;top:149px;width:1.3px;height:851px;background:#7b7c7e"></div>
<div style="position:absolute;left:928.196px;top:149px;width:1.3px;height:851px;background:#7b7c7e"></div>
<div style="position:absolute;left:1037.844px;top:149px;width:1.3px;height:851px;background:#7b7c7e"></div>
<div style="position:absolute;left:1147.4920000000002px;top:149px;width:1.3px;height:851px;background:#7b7c7e"></div>
<div style="position:absolute;left:1257.14px;top:149px;width:1.3px;height:851px;background:#7b7c7e"></div>
<div style="position:absolute;left:1366.788px;top:149px;width:1.3px;height:851px;background:#7b7c7e"></div>
<div style="position:absolute;left:1476.4360000000001px;top:149px;width:1.3px;height:851px;background:#7b7c7e"></div>
<div style="position:absolute;left:1586.084px;top:149px;width:1.3px;height:851px;background:#7b7c7e"></div>
<div style="position:absolute;left:1695.732px;top:149px;width:1.3px;height:851px;background:#7b7c7e"></div>
<div style="position:absolute;left:1805.38px;top:149px;width:1.3px;height:851px;background:#7b7c7e"></div>
<div style="position:absolute;left:847px;top:175px;width:8px;height:33px;background:#a9a400"></div>
<div style="position:absolute;left:882.6px;top:175px;width:8.4px;height:33px;background:#a9a400"></div>
<div style="position:absolute;left:894px;top:175px;width:13px;height:33px;background:#a9a400"></div>
<div style="position:absolute;left:918px;top:175px;width:9.5px;height:33px;background:#c41e1e"></div>
<div style="position:absolute;left:928.3px;top:175px;width:10.2px;height:33px;background:#c41e1e"></div>
<div style="position:absolute;left:1000px;top:175px;width:14px;height:33px;background:#00a000"></div>
<div style="position:absolute;left:1016.9px;top:175px;width:14.6px;height:33px;background:#00a000"></div>
<div style="position:absolute;left:1052.9px;top:175px;width:6.7px;height:33px;background:#00a000"></div>
<div style="position:absolute;left:1073.6px;top:175px;width:13.0px;height:33px;background:#00a000"></div>
<div style="position:absolute;left:1124.4px;top:175px;width:15.1px;height:33px;background:#00a000"></div>
<div style="position:absolute;left:1160.4px;top:175px;width:7.9px;height:33px;background:#00a000"></div>
<div style="position:absolute;left:1169.9px;top:175px;width:13.5px;height:33px;background:#00a000"></div>
<div style="position:absolute;left:1533px;top:173.5px;width:16px;height:32.0px;background:#00a000"></div>
<div style="position:absolute;left:1549.8px;top:173.5px;width:8.3px;height:32.0px;background:#c41e1e"></div>
<div style="position:absolute;left:1571.8px;top:173.5px;width:8.3px;height:32.0px;background:#a9a400"></div>
<div style="position:absolute;left:1580.8px;top:173.5px;width:3.2px;height:32.0px;background:#c41e1e"></div>
<div style="position:absolute;left:1588px;top:173.5px;width:5.6px;height:32.0px;background:#a9a400"></div>
<div style="position:absolute;left:1594.8px;top:173.5px;width:7.9px;height:32.0px;background:#c41e1e"></div>
<div style="position:absolute;left:1608.3px;top:173.5px;width:8.1px;height:32.0px;background:#a9a400"></div>
<div style="position:absolute;left:1621px;top:173.5px;width:15px;height:32.0px;background:#a9a400"></div>
<div style="position:absolute;left:1636.7px;top:173.5px;width:9.4px;height:32.0px;background:#00a000"></div>
<div style="position:absolute;left:1650.6px;top:173.5px;width:14.2px;height:32.0px;background:#00a000"></div>
<div style="position:absolute;left:1665.3px;top:173.5px;width:8.5px;height:32.0px;background:#c41e1e"></div>
<div style="position:absolute;left:1679.2px;top:173.5px;width:16.2px;height:32.0px;background:#c41e1e"></div>
<div style="position:absolute;left:1708.7px;top:173.5px;width:8.3px;height:32.0px;background:#a9a400"></div>
<div style="position:absolute;left:1722.6px;top:173.5px;width:37.8px;height:32.0px;background:#a9a400"></div>
<div style="position:absolute;left:699px;top:239.5px;width:1199px;height:2.5px;background:#e01414"></div>
<svg style="position:absolute;left:700px;top:150px" width="1200" height="230"><polyline points="37.1,224.9 42.8,200.0 50.6,185.5 63.0,173.0 70.9,161.9 77.6,155.0 90.0,144.6 96.8,141.2 104.0,136.0 110.7,137.8 117.5,136.5 124.9,141.0 130.5,141.6 137.7,145.7 145.0,145.7 151.2,125.9 158.6,112.4 166.0,109.7 172.1,114.6 179.3,130.4 186.0,114.6 193.0,106.8 199.8,104.0 206.6,110.4 213.8,110.4 220.5,108.3 226.1,105.6 232.9,107.2 239.6,100.0 246.4,92.8 253.1,91.5 261.0,94.4 267.3,96.9 274.5,94.4 281.3,92.8 288.0,94.2 294.8,95.5 300.0,94.4 307.9,92.8 315.8,95.5 322.5,100.0 328.8,107.2 337.1,96.6 349.0,88.8 355.8,95.5 368.6,103.4 375.4,99.6 382.8,99.6 396.3,113.5 402.4,145.7 409.6,145.7 415.9,141.2 423.3,137.8 430.0,110.0 437.3,100.7 444.0,96.6 450.8,103.4 457.5,111.7 465.4,107.9 472.1,98.9 480.0,93.7 485.6,90.6 498.0,75.3 511.5,62.4 525.0,60.0 536.3,60.6 546.4,65.1 558.8,74.1 570.0,87.6 579.0,97.8 588.0,111.2 592.5,118.0 600.0,121.4 606.8,121.4 613.5,122.5 622.5,125.9 633.8,128.6 646.1,125.9 654.0,128.6 661.9,132.6 667.5,134.4 694.5,134.4 708.0,114.6 715.4,112.4 728.3,114.6 736.1,115.1 742.9,112.8 750.8,112.8 762.0,115.1 769.9,118.7 777.8,118.7 789.0,120.9 796.9,119.6 803.6,119.6 816.0,113.1 825.0,109.7 830.6,108.6 837.4,110.6 844.1,107.9 850.9,108.3 858.8,104.0 865.5,101.8 871.2,102.3 879.0,100.7 885.3,104.0 892.5,100.7 900.0,102.3 906.8,97.8 913.5,97.8 920.2,99.3 926.5,105.0 932.6,102.9 940.5,104.5 947.2,104.5 952.9,106.3 959.6,101.8 966.4,103.4 973.1,101.8 979.9,104.5 986.6,104.5 994.5,107.2 1001.3,108.6 1007.6,110.8 1013.6,94.4 1021.5,78.6 1028.3,71.9 1035.0,69.6 1041.8,69.0 1055.3,69.0 1062.0,70.3 1069.9,70.3 1077.8,68.5 1086.8,67.8 1095.8,73.0 1103.6,79.8 1110.4,91.0 1116.0,102.9 1122.8,110.6 1129.5,110.6 1136.3,107.2 1143.0,101.6 1149.8,96.2 1156.5,97.1 1163.3,100.7 1170.0,105.6 1176.8,107.9 1183.5,109.0 1190.3,107.9 1197.5,109.0" fill="none" stroke="#ffa200" stroke-width="2.6" stroke-linejoin="round"/></svg>
<div style="position:absolute;left:846.4px;top:376.6px;width:2.9px;height:49.0px;background:#a9585b;border:1px solid #9a2228;box-shadow:inset 0 0 0 1.2px #f08a8a;overflow:hidden"><div style="left:1px;top:3px;width:0px;height:6px;background:#b83a3e"></div></div>
<div style="position:absolute;left:846.4px;top:429.2px;width:2.9px;height:49.1px;background:#a9585b;border:1px solid #9a2228;box-shadow:inset 0 0 0 1.2px #f08a8a;overflow:hidden"><svg style="position:absolute;left:2px;top:0" width="1" height="49.1"><polygon points="0.0,23.0 0.5,22.7 1.0,22.8 1.0,26.1 0.5,26.3 0.0,26.0" fill="#7a2a2e"/></svg></div>
<div style="position:absolute;left:849.3px;top:376.6px;width:9.4px;height:49.0px;background:#a9585b;border:1px solid #9a2228;box-shadow:inset 0 0 0 1.2px #f08a8a;overflow:hidden"><div style="left:1px;top:3px;width:4.4px;height:6px;background:#b83a3e"></div></div>
<div style="position:absolute;left:849.3px;top:429.2px;width:9.4px;height:49.1px;background:#a9585b;border:1px solid #9a2228;box-shadow:inset 0 0 0 1.2px #f08a8a;overflow:hidden"><svg style="position:absolute;left:2px;top:0" width="2.4000000000000004" height="49.1"><polygon points="0.0,22.9 1.2,23.0 2.4,22.9 2.4,26.0 1.2,26.0 0.0,26.0" fill="#7a2a2e"/></svg></div>
<div style="position:absolute;left:875.2px;top:376.6px;width:6.3px;height:49.0px;background:#a9585b;border:1px solid #9a2228;box-shadow:inset 0 0 0 1.2px #f08a8a;overflow:hidden"><div style="left:1px;top:3px;width:1.2999999999999998px;height:6px;background:#b83a3e"></div></div>
<div style="position:absolute;left:875.2px;top:429.2px;width:6.3px;height:49.1px;background:#a9585b;border:1px solid #9a2228;box-shadow:inset 0 0 0 1.2px #f08a8a;overflow:hidden"></div>
<div style="position:absolute;left:881.5px;top:376.6px;width:62.5px;height:49.0px;background:#a9585b;border:1px solid #9a2228;box-shadow:inset 0 0 0 1.2px #f08a8a;overflow:hidden"><div style="left:45.7px;top:0;width:1.2px;height:49.0px;background:rgba(140,40,45,0.55)"></div><div style="left:0;top:0;width:100%;height:19px;background:#c65d60"></div><div style="left:4px;top:3px;font-size:12.5px;letter-spacing:-0.4px;font-weight:bold;color:#140404;white-space:nowrap;overflow:hidden;width:56.5px;line-height:16px">DIALOGU</div></div>
<div style="position:absolute;left:881.5px;top:429.2px;width:62.5px;height:49.1px;background:#a9585b;border:1px solid #9a2228;box-shadow:inset 0 0 0 1.2px #f08a8a;overflow:hidden"><div style="left:45.7px;top:0;width:1.2px;height:49.1px;background:rgba(140,40,45,0.55)"></div><div style="left:0;top:0;width:100%;height:19px;background:#c65d60"></div><div style="left:4px;top:3px;font-size:12.5px;letter-spacing:-0.4px;font-weight:bold;color:#140404;white-space:nowrap;overflow:hidden;width:56.5px;line-height:16px">VO_NEW_</div><div style="left:15px;top:25.55px;width:16px;height:20.55px;background:#b9595c"></div><svg style="position:absolute;left:17px;top:33.1px" width="12" height="9"><path d="M0 9 L12 0 V9Z" fill="#1a0a0a"/></svg><svg style="position:absolute;left:2px;top:0" width="55.5" height="49.1"><polygon points="0.0,21.2 1.0,21.8 2.0,20.8 3.0,20.9 4.0,15.6 5.0,20.3 6.1,21.8 7.1,21.5 8.1,21.7 9.1,20.8 10.1,21.0 11.1,22.0 12.1,20.7 13.1,21.4 14.1,21.2 15.1,20.5 16.1,21.6 17.2,21.0 18.2,20.6 19.2,20.1 20.2,21.2 21.2,21.8 22.2,22.0 23.2,20.5 24.2,20.3 25.2,20.7 26.2,20.9 27.2,20.4 28.3,21.1 29.3,22.0 30.3,20.8 31.3,20.4 32.3,21.3 33.3,22.0 34.3,21.7 35.3,22.0 36.3,21.8 37.3,21.3 38.3,21.9 39.4,21.0 40.4,20.4 41.4,21.5 42.4,21.3 43.4,20.1 44.4,21.7 45.4,21.6 46.4,20.9 47.4,22.1 48.4,21.3 49.4,20.1 50.5,21.0 51.5,16.9 52.5,20.3 53.5,20.3 54.5,21.3 55.5,21.9 55.5,27.0 54.5,27.5 53.5,28.4 52.5,28.4 51.5,31.5 50.5,27.7 49.4,28.5 48.4,27.5 47.4,26.8 46.4,27.9 45.4,27.2 44.4,27.1 43.4,28.5 42.4,27.4 41.4,27.3 40.4,28.3 39.4,27.8 38.3,26.9 37.3,27.5 36.3,27.0 35.3,26.9 34.3,27.1 33.3,26.8 32.3,27.5 31.3,28.3 30.3,28.0 29.3,26.9 28.3,27.6 27.2,28.3 26.2,27.8 25.2,28.0 24.2,28.4 23.2,28.2 22.2,26.8 21.2,27.1 20.2,27.5 19.2,28.6 18.2,28.1 17.2,27.7 16.1,27.2 15.1,28.2 14.1,27.6 13.1,27.4 12.1,28.0 11.1,26.9 10.1,27.8 9.1,27.9 8.1,27.1 7.1,27.3 6.1,27.0 5.0,28.3 4.0,32.6 3.0,27.8 2.0,27.9 1.0,27.0 0.0,27.6" fill="#7a2a2e"/></svg></div>
<div style="position:absolute;left:996px;top:376.6px;width:52px;height:49.0px;background:#a9585b;border:1px solid #9a2228;box-shadow:inset 0 0 0 1.2px #f08a8a;overflow:hidden"><div style="left:40.8px;top:0;width:1.2px;height:49.0px;background:rgba(140,40,45,0.55)"></div><div style="left:0;top:0;width:100%;height:19px;background:#c65d60"></div><div style="left:4px;top:3px;font-size:12.5px;letter-spacing:-0.4px;font-weight:bold;color:#140404;white-space:nowrap;overflow:hidden;width:46px;line-height:16px">DIALOG</div></div>
<div style="position:absolute;left:996px;top:429.2px;width:52px;height:49.1px;background:#a9585b;border:1px solid #9a2228;box-shadow:inset 0 0 0 1.2px #f08a8a;overflow:hidden"><div style="left:40.8px;top:0;width:1.2px;height:49.1px;background:rgba(140,40,45,0.55)"></div><div style="left:20px;top:25.55px;width:16px;height:20.55px;background:#b9595c"></div><svg style="position:absolute;left:22px;top:33.1px" width="12" height="9"><path d="M0 9 L12 0 V9Z" fill="#1a0a0a"/></svg><svg style="position:absolute;left:2px;top:0" width="45" height="49.1"><polygon points="0.0,21.9 1.0,21.7 2.0,18.2 3.0,22.1 4.0,21.9 5.0,22.0 6.0,20.8 7.0,21.6 8.0,21.3 9.0,20.4 10.0,21.1 11.0,21.9 12.0,21.4 13.0,20.4 14.0,22.0 15.0,21.0 16.0,17.4 17.0,21.0 18.0,20.3 19.0,21.5 20.0,21.7 21.0,21.0 22.0,21.4 23.0,20.4 24.0,20.3 25.0,20.4 26.0,21.6 27.0,18.2 28.0,22.0 29.0,21.6 30.0,20.1 31.0,20.2 32.0,20.1 33.0,21.6 34.0,21.7 35.0,20.8 36.0,20.4 37.0,20.8 38.0,21.9 39.0,20.2 40.0,20.6 41.0,21.7 42.0,21.4 43.0,20.1 44.0,21.3 45.0,20.6 45.0,28.1 44.0,27.5 43.0,28.5 42.0,27.4 41.0,27.1 40.0,28.1 39.0,28.4 38.0,26.9 37.0,28.0 36.0,28.3 35.0,27.9 34.0,27.1 33.0,27.2 32.0,28.5 31.0,28.5 30.0,28.5 29.0,27.2 28.0,26.8 27.0,30.3 26.0,27.2 25.0,28.3 24.0,28.3 23.0,28.3 22.0,27.4 21.0,27.7 20.0,27.1 19.0,27.3 18.0,28.4 17.0,27.7 16.0,31.0 15.0,27.7 14.0,26.8 13.0,28.3 12.0,27.4 11.0,26.9 10.0,27.6 9.0,28.3 8.0,27.4 7.0,27.2 6.0,27.9 5.0,26.8 4.0,27.0 3.0,26.8 2.0,30.2 1.0,27.2 0.0,26.9" fill="#7a2a2e"/></svg></div>
<div style="position:absolute;left:1054px;top:376.6px;width:6.3px;height:49.0px;background:#a9585b;border:1px solid #9a2228;box-shadow:inset 0 0 0 1.2px #f08a8a;overflow:hidden"><div style="left:1px;top:3px;width:1.2999999999999998px;height:6px;background:#b83a3e"></div></div>
<div style="position:absolute;left:1054px;top:429.2px;width:6.3px;height:49.1px;background:#a9585b;border:1px solid #9a2228;box-shadow:inset 0 0 0 1.2px #f08a8a;overflow:hidden"><svg style="position:absolute;left:2px;top:0" width="1" height="49.1"><polygon points="0.0,23.0 0.5,22.1 1.0,23.0 1.0,25.9 0.5,26.7 0.0,25.9" fill="#7a2a2e"/></svg></div>
<div style="position:absolute;left:1060.3px;top:376.6px;width:6.2px;height:49.0px;background:#a9585b;border:1px solid #9a2228;box-shadow:inset 0 0 0 1.2px #f08a8a;overflow:hidden"><div style="left:1px;top:3px;width:1.2000000000000002px;height:6px;background:#b83a3e"></div></div>
<div style="position:absolute;left:1060.3px;top:429.2px;width:6.2px;height:49.1px;background:#a9585b;border:1px solid #9a2228;box-shadow:inset 0 0 0 1.2px #f08a8a;overflow:hidden"><svg style="position:absolute;left:2px;top:0" width="1" height="49.1"><polygon points="0.0,22.1 0.5,22.8 1.0,21.5 1.0,27.3 0.5,26.2 0.0,26.8" fill="#7a2a2e"/></svg></div>
<div style="position:absolute;left:1069px;top:376.6px;width:14.3px;height:49.0px;background:#a9585b;border:1px solid #9a2228;box-shadow:inset 0 0 0 1.2px #f08a8a;overflow:hidden"><div style="left:1px;top:3px;width:9.3px;height:6px;background:#b83a3e"></div></div>
<div style="position:absolute;left:1069px;top:429.2px;width:14.3px;height:49.1px;background:#a9585b;border:1px solid #9a2228;box-shadow:inset 0 0 0 1.2px #f08a8a;overflow:hidden"><svg style="position:absolute;left:2px;top:0" width="7.300000000000001" height="49.1"><polygon points="0.0,21.4 1.0,22.0 2.1,22.2 3.1,21.6 4.2,22.4 5.2,22.4 6.3,22.4 7.3,22.6 7.3,26.3 6.3,26.5 5.2,26.4 4.2,26.5 3.1,27.2 2.1,26.7 1.0,26.8 0.0,27.4" fill="#7a2a2e"/></svg></div>
<div style="position:absolute;left:1123.7px;top:376.6px;width:16.7px;height:49.0px;background:#a9585b;border:1px solid #9a2228;box-shadow:inset 0 0 0 1.2px #f08a8a;overflow:hidden"><div style="left:1px;top:3px;width:11.7px;height:6px;background:#b83a3e"></div></div>
<div style="position:absolute;left:1123.7px;top:429.2px;width:16.7px;height:49.1px;background:#a9585b;border:1px solid #9a2228;box-shadow:inset 0 0 0 1.2px #f08a8a;overflow:hidden"><svg style="position:absolute;left:2px;top:0" width="9.7" height="49.1"><polygon points="0.0,22.1 1.1,21.8 2.2,22.0 3.2,21.9 4.3,19.2 5.4,22.0 6.5,22.7 7.5,22.4 8.6,21.6 9.7,22.2 9.7,26.7 8.6,27.2 7.5,26.5 6.5,26.2 5.4,26.8 4.3,29.3 3.2,26.9 2.2,26.8 1.1,27.0 0.0,26.7" fill="#7a2a2e"/></svg></div>
<div style="position:absolute;left:1156.7px;top:376.6px;width:6.8px;height:49.0px;background:#a9585b;border:1px solid #9a2228;box-shadow:inset 0 0 0 1.2px #f08a8a;overflow:hidden"><div style="left:1px;top:3px;width:1.7999999999999998px;height:6px;background:#b83a3e"></div></div>
<div style="position:absolute;left:1156.7px;top:429.2px;width:6.8px;height:49.1px;background:#a9585b;border:1px solid #9a2228;box-shadow:inset 0 0 0 1.2px #f08a8a;overflow:hidden"><svg style="position:absolute;left:2px;top:0" width="1" height="49.1"><polygon points="0.0,22.5 0.5,23.0 1.0,22.9 1.0,26.1 0.5,25.9 0.0,26.4" fill="#7a2a2e"/></svg></div>
<div style="position:absolute;left:1163.5px;top:376.6px;width:15.5px;height:49.0px;background:#a9585b;border:1px solid #9a2228;box-shadow:inset 0 0 0 1.2px #f08a8a;overflow:hidden"><div style="left:1px;top:3px;width:10.5px;height:6px;background:#b83a3e"></div></div>
<div style="position:absolute;left:1163.5px;top:429.2px;width:15.5px;height:49.1px;background:#a9585b;border:1px solid #9a2228;box-shadow:inset 0 0 0 1.2px #f08a8a;overflow:hidden"><svg style="position:absolute;left:2px;top:0" width="8.5" height="49.1"><polygon points="0.0,21.6 1.1,21.9 2.1,21.4 3.2,21.8 4.2,22.0 5.3,22.1 6.4,22.0 7.4,21.7 8.5,21.3 8.5,27.4 7.4,27.1 6.4,26.8 5.3,26.8 4.2,26.9 3.2,27.0 2.1,27.4 1.1,26.9 0.0,27.2" fill="#7a2a2e"/></svg></div>
<div style="position:absolute;left:1533.2px;top:376.6px;width:6.8px;height:49.0px;background:#a9585b;border:1px solid #9a2228;box-shadow:inset 0 0 0 1.2px #f08a8a;overflow:hidden"></div>
<div style="position:absolute;left:1540px;top:376.6px;width:7.5px;height:49.0px;background:#a9585b;border:1px solid #9a2228;box-shadow:inset 0 0 0 1.2px #f08a8a;overflow:hidden"></div>
<div style="position:absolute;left:1554.8px;top:376.6px;width:8.4px;height:49.0px;background:#a9585b;border:1px solid #9a2228;box-shadow:inset 0 0 0 1.2px #f08a8a;overflow:hidden"></div>
<div style="position:absolute;left:1565px;top:376.6px;width:7.6px;height:49.0px;background:#a9585b;border:1px solid #9a2228;box-shadow:inset 0 0 0 1.2px #f08a8a;overflow:hidden"></div>
<div style="position:absolute;left:1575.3px;top:376.6px;width:7.8px;height:49.0px;background:#a9585b;border:1px solid #9a2228;box-shadow:inset 0 0 0 1.2px #f08a8a;overflow:hidden"></div>
<div style="position:absolute;left:1586.6px;top:376.6px;width:6.3px;height:49.0px;background:#a9585b;border:1px solid #9a2228;box-shadow:inset 0 0 0 1.2px #f08a8a;overflow:hidden"></div>
<div style="position:absolute;left:1596px;top:376.6px;width:6px;height:49.0px;background:#a9585b;border:1px solid #9a2228;box-shadow:inset 0 0 0 1.2px #f08a8a;overflow:hidden"></div>
<div style="position:absolute;left:1602.3px;top:376.6px;width:6.7px;height:49.0px;background:#a9585b;border:1px solid #9a2228;box-shadow:inset 0 0 0 1.2px #f08a8a;overflow:hidden"></div>
<div style="position:absolute;left:1612.3px;top:376.6px;width:5.9px;height:49.0px;background:#a9585b;border:1px solid #9a2228;box-shadow:inset 0 0 0 1.2px #f08a8a;overflow:hidden"></div>
<div style="position:absolute;left:1621.2px;top:376.6px;width:7.3px;height:49.0px;background:#a9585b;border:1px solid #9a2228;box-shadow:inset 0 0 0 1.2px #f08a8a;overflow:hidden"></div>
<div style="position:absolute;left:1629.8px;top:376.6px;width:6.0px;height:49.0px;background:#a9585b;border:1px solid #9a2228;box-shadow:inset 0 0 0 1.2px #f08a8a;overflow:hidden"></div>
<div style="position:absolute;left:1639.3px;top:376.6px;width:6.2px;height:49.0px;background:#a9585b;border:1px solid #9a2228;box-shadow:inset 0 0 0 1.2px #f08a8a;overflow:hidden"></div>
<div style="position:absolute;left:1649.5px;top:376.6px;width:7.9px;height:49.0px;background:#a9585b;border:1px solid #9a2228;box-shadow:inset 0 0 0 1.2px #f08a8a;overflow:hidden"></div>
<div style="position:absolute;left:1665.7px;top:376.6px;width:7.3px;height:49.0px;background:#a9585b;border:1px solid #9a2228;box-shadow:inset 0 0 0 1.2px #f08a8a;overflow:hidden"></div>
<div style="position:absolute;left:1679.2px;top:376.6px;width:7.8px;height:49.0px;background:#a9585b;border:1px solid #9a2228;box-shadow:inset 0 0 0 1.2px #f08a8a;overflow:hidden"></div>
<div style="position:absolute;left:1706.2px;top:376.6px;width:5.4px;height:49.0px;background:#a9585b;border:1px solid #9a2228;box-shadow:inset 0 0 0 1.2px #f08a8a;overflow:hidden"></div>
<div style="position:absolute;left:1711.6px;top:376.6px;width:7.9px;height:49.0px;background:#a9585b;border:1px solid #9a2228;box-shadow:inset 0 0 0 1.2px #f08a8a;overflow:hidden"></div>
<div style="position:absolute;left:1726.2px;top:376.6px;width:13.8px;height:49.0px;background:#a9585b;border:1px solid #9a2228;box-shadow:inset 0 0 0 1.2px #f08a8a;overflow:hidden"></div>
<div style="position:absolute;left:1743.2px;top:376.6px;width:9.5px;height:49.0px;background:#a9585b;border:1px solid #9a2228;box-shadow:inset 0 0 0 1.2px #f08a8a;overflow:hidden"></div>
<div style="position:absolute;left:1764.8px;top:376.6px;width:4.2px;height:49.0px;background:#a9585b;border:1px solid #9a2228;box-shadow:inset 0 0 0 1.2px #f08a8a;overflow:hidden"></div>
<div style="position:absolute;left:1769px;top:376.6px;width:5.8px;height:49.0px;background:#a9585b;border:1px solid #9a2228;box-shadow:inset 0 0 0 1.2px #f08a8a;overflow:hidden"></div>
<div style="position:absolute;left:1556.7px;top:691.3px;width:6.8px;height:48.6px;background:#a9585b;border:1px solid #9a2228;box-shadow:inset 0 0 0 1.2px #f08a8a;overflow:hidden"></div>
<div style="position:absolute;left:1567.5px;top:691.3px;width:5.5px;height:48.6px;background:#a9585b;border:1px solid #9a2228;box-shadow:inset 0 0 0 1.2px #f08a8a;overflow:hidden"></div>
<div style="position:absolute;left:1587px;top:691.3px;width:6.4px;height:48.6px;background:#a9585b;border:1px solid #9a2228;box-shadow:inset 0 0 0 1.2px #f08a8a;overflow:hidden"></div>
<div style="position:absolute;left:1602.4px;top:691.3px;width:5.4px;height:48.6px;background:#a9585b;border:1px solid #9a2228;box-shadow:inset 0 0 0 1.2px #f08a8a;overflow:hidden"></div>
<div style="position:absolute;left:1624px;top:691.3px;width:4.7px;height:48.6px;background:#a9585b;border:1px solid #9a2228;box-shadow:inset 0 0 0 1.2px #f08a8a;overflow:hidden"></div>
<div style="position:absolute;left:1640.2px;top:691.3px;width:5.4px;height:48.6px;background:#a9585b;border:1px solid #9a2228;box-shadow:inset 0 0 0 1.2px #f08a8a;overflow:hidden"></div>
<div style="position:absolute;left:1665.5px;top:691.3px;width:7.9px;height:48.6px;background:#a9585b;border:1px solid #9a2228;box-shadow:inset 0 0 0 1.2px #f08a8a;overflow:hidden"></div>
<div style="position:absolute;left:1713px;top:691.3px;width:6.5px;height:48.6px;background:#a9585b;border:1px solid #9a2228;box-shadow:inset 0 0 0 1.2px #f08a8a;overflow:hidden"></div>
<div style="position:absolute;left:1731.3px;top:691.3px;width:9.0px;height:48.6px;background:#a9585b;border:1px solid #9a2228;box-shadow:inset 0 0 0 1.2px #f08a8a;overflow:hidden"><svg style="position:absolute;left:2px;top:0" width="2.0" height="48.6"><polygon points="0.0,22.1 1.0,21.7 2.0,22.6 2.0,25.8 1.0,26.6 0.0,26.3" fill="#7a2a2e"/></svg></div>
<div style="position:absolute;left:1745.8px;top:691.3px;width:6.1px;height:48.6px;background:#a9585b;border:1px solid #9a2228;box-shadow:inset 0 0 0 1.2px #f08a8a;overflow:hidden"></div>
<div style="position:absolute;left:1769.2px;top:691.3px;width:5.4px;height:48.6px;background:#a9585b;border:1px solid #9a2228;box-shadow:inset 0 0 0 1.2px #f08a8a;overflow:hidden"></div>
<div style="position:absolute;left:1554.9px;top:743.8px;width:6.8px;height:48.6px;background:#a9585b;border:1px solid #9a2228;box-shadow:inset 0 0 0 1.2px #f08a8a;overflow:hidden"></div>
<div style="position:absolute;left:1564.6px;top:743.8px;width:6.1px;height:48.6px;background:#a9585b;border:1px solid #9a2228;box-shadow:inset 0 0 0 1.2px #f08a8a;overflow:hidden"></div>
<div style="position:absolute;left:1597px;top:743.8px;width:5.4px;height:48.6px;background:#a9585b;border:1px solid #9a2228;box-shadow:inset 0 0 0 1.2px #f08a8a;overflow:hidden"></div>
<div style="position:absolute;left:1629.4px;top:743.8px;width:6.2px;height:48.6px;background:#a9585b;border:1px solid #9a2228;box-shadow:inset 0 0 0 1.2px #f08a8a;overflow:hidden"></div>
<div style="position:absolute;left:1649.2px;top:743.8px;width:8.0px;height:48.6px;background:#a9585b;border:1px solid #9a2228;box-shadow:inset 0 0 0 1.2px #f08a8a;overflow:hidden"></div>
<div style="position:absolute;left:1678.8px;top:743.8px;width:8.2px;height:48.6px;background:#a9585b;border:1px solid #9a2228;box-shadow:inset 0 0 0 1.2px #f08a8a;overflow:hidden"><svg style="position:absolute;left:2px;top:0" width="1.1999999999999993" height="48.6"><polygon points="0.0,22.7 0.6,22.7 1.2,21.9 1.2,26.5 0.6,25.7 0.0,25.7" fill="#7a2a2e"/></svg></div>
<div style="position:absolute;left:1715.1px;top:743.8px;width:5.1px;height:48.6px;background:#a9585b;border:1px solid #9a2228;box-shadow:inset 0 0 0 1.2px #f08a8a;overflow:hidden"></div>
<div style="position:absolute;left:1764.5px;top:743.8px;width:6.5px;height:48.6px;background:#a9585b;border:1px solid #9a2228;box-shadow:inset 0 0 0 1.2px #f08a8a;overflow:hidden"></div>
<div style="position:absolute;left:1555.6px;top:796.3px;width:7.9px;height:48.6px;background:#a9585b;border:1px solid #9a2228;box-shadow:inset 0 0 0 1.2px #f08a8a;overflow:hidden"></div>
<div style="position:absolute;left:1566.4px;top:796.3px;width:5.4px;height:48.6px;background:#a9585b;border:1px solid #9a2228;box-shadow:inset 0 0 0 1.2px #f08a8a;overflow:hidden"></div>
<div style="position:absolute;left:1595.2px;top:796.3px;width:6.5px;height:48.6px;background:#a9585b;border:1px solid #9a2228;box-shadow:inset 0 0 0 1.2px #f08a8a;overflow:hidden"></div>
<div style="position:absolute;left:1603.2px;top:796.3px;width:5.7px;height:48.6px;background:#a9585b;border:1px solid #9a2228;box-shadow:inset 0 0 0 1.2px #f08a8a;overflow:hidden"></div>
<div style="position:absolute;left:1622.2px;top:796.3px;width:5.4px;height:48.6px;background:#a9585b;border:1px solid #9a2228;box-shadow:inset 0 0 0 1.2px #f08a8a;overflow:hidden"></div>
<div style="position:absolute;left:1640.2px;top:796.3px;width:5.4px;height:48.6px;background:#a9585b;border:1px solid #9a2228;box-shadow:inset 0 0 0 1.2px #f08a8a;overflow:hidden"></div>
<div style="position:absolute;left:1665.5px;top:796.3px;width:6.1px;height:48.6px;background:#a9585b;border:1px solid #9a2228;box-shadow:inset 0 0 0 1.2px #f08a8a;overflow:hidden"></div>
<div style="position:absolute;left:1712.3px;top:796.3px;width:4.3px;height:48.6px;background:#a9585b;border:1px solid #9a2228;box-shadow:inset 0 0 0 1.2px #f08a8a;overflow:hidden"></div>
<div style="position:absolute;left:1728.5px;top:796.3px;width:10.1px;height:48.6px;background:#a9585b;border:1px solid #9a2228;box-shadow:inset 0 0 0 1.2px #f08a8a;overflow:hidden"><svg style="position:absolute;left:2px;top:0" width="3.0999999999999996" height="48.6"><polygon points="0.0,22.5 1.0,21.9 2.1,21.6 3.1,22.5 3.1,26.0 2.1,26.7 1.0,26.5 0.0,25.9" fill="#7a2a2e"/></svg></div>
<div style="position:absolute;left:1742.9px;top:796.3px;width:7.1px;height:48.6px;background:#a9585b;border:1px solid #9a2228;box-shadow:inset 0 0 0 1.2px #f08a8a;overflow:hidden"></div>
<div style="position:absolute;left:1766.3px;top:796.3px;width:5.4px;height:48.6px;background:#a9585b;border:1px solid #9a2228;box-shadow:inset 0 0 0 1.2px #f08a8a;overflow:hidden"></div>
<div style="position:absolute;left:1533.3px;top:848.8px;width:6.7px;height:48.6px;background:#a9585b;border:1px solid #9a2228;box-shadow:inset 0 0 0 1.2px #f08a8a;overflow:hidden"></div>
<div style="position:absolute;left:1540px;top:848.8px;width:7.7px;height:48.6px;background:#a9585b;border:1px solid #9a2228;box-shadow:inset 0 0 0 1.2px #f08a8a;overflow:hidden"></div>
<div style="position:absolute;left:1575.4px;top:848.8px;width:7.9px;height:48.6px;background:#a9585b;border:1px solid #9a2228;box-shadow:inset 0 0 0 1.2px #f08a8a;overflow:hidden"></div>
<div style="position:absolute;left:1611.4px;top:848.8px;width:7.2px;height:48.6px;background:#a9585b;border:1px solid #9a2228;box-shadow:inset 0 0 0 1.2px #f08a8a;overflow:hidden"></div>
<div style="position:absolute;left:1620.4px;top:848.8px;width:6.5px;height:48.6px;background:#a9585b;border:1px solid #9a2228;box-shadow:inset 0 0 0 1.2px #f08a8a;overflow:hidden"></div>
<div style="position:absolute;left:1639.2px;top:848.8px;width:5.7px;height:48.6px;background:#a9585b;border:1px solid #9a2228;box-shadow:inset 0 0 0 1.2px #f08a8a;overflow:hidden"></div>
<div style="position:absolute;left:1666.5px;top:848.8px;width:6.9px;height:48.6px;background:#a9585b;border:1px solid #9a2228;box-shadow:inset 0 0 0 1.2px #f08a8a;overflow:hidden"></div>
<div style="position:absolute;left:1706.1px;top:848.8px;width:9.8px;height:48.6px;background:#a9585b;border:1px solid #9a2228;box-shadow:inset 0 0 0 1.2px #f08a8a;overflow:hidden"><svg style="position:absolute;left:2px;top:0" width="2.8000000000000007" height="48.6"><polygon points="0.0,22.2 1.4,21.5 2.8,22.5 2.8,25.9 1.4,26.8 0.0,26.1" fill="#7a2a2e"/></svg></div>
<div style="position:absolute;left:1726px;top:848.8px;width:13.3px;height:48.6px;background:#a9585b;border:1px solid #9a2228;box-shadow:inset 0 0 0 1.2px #f08a8a;overflow:hidden"><svg style="position:absolute;left:2px;top:0" width="6.300000000000001" height="48.6"><polygon points="0.0,21.9 1.1,22.3 2.1,18.9 3.2,21.8 4.2,22.6 5.3,21.7 6.3,22.5 6.3,25.9 5.3,26.6 4.2,25.9 3.2,26.5 2.1,29.2 1.1,26.1 0.0,26.5" fill="#7a2a2e"/></svg></div>
<div style="position:absolute;left:1744.7px;top:848.8px;width:8.3px;height:48.6px;background:#a9585b;border:1px solid #9a2228;box-shadow:inset 0 0 0 1.2px #f08a8a;overflow:hidden"><svg style="position:absolute;left:2px;top:0" width="1.3000000000000007" height="48.6"><polygon points="0.0,21.9 0.7,22.7 1.3,22.8 1.3,25.7 0.7,25.7 0.0,26.5" fill="#7a2a2e"/></svg></div>
<div style="position:absolute;left:878.3px;top:901.5px;width:80.0px;height:48px;background:#245a2e;border:1px solid #0b4a16;box-shadow:inset 0 0 0 1.2px #20a438;overflow:hidden"><div style="left:48.9px;top:0;width:1.2px;height:48px;background:rgba(10,40,15,0.6)"></div><div style="left:1px;top:1px;width:78.0px;height:5px;background:#1f5228"></div><div style="left:5px;top:3px;font-size:12px;letter-spacing:-0.4px;font-weight:bold;color:#f0f0f0;white-space:nowrap;overflow:hidden;width:72.0px;line-height:16px">FOLEY</div><div style="left:3px;bottom:3px;width:72.0px;height:2px;background:#133a1a"></div></div>
<div style="position:absolute;left:958.3px;top:901.5px;width:70.4px;height:48px;background:#245a2e;border:1px solid #0b4a16;box-shadow:inset 0 0 0 1.2px #20a438;overflow:hidden"><div style="left:1px;top:1px;width:68.4px;height:5px;background:#1f5228"></div><div style="left:5px;top:3px;font-size:12px;letter-spacing:-0.4px;font-weight:bold;color:#f0f0f0;white-space:nowrap;overflow:hidden;width:62.400000000000006px;line-height:16px">FOLEY</div><div style="left:3px;bottom:3px;width:62.400000000000006px;height:2px;background:#133a1a"></div></div>
<div style="position:absolute;left:1039.2px;top:901.5px;width:27.5px;height:48px;background:#245a2e;border:1px solid #0b4a16;box-shadow:inset 0 0 0 1.2px #20a438;overflow:hidden"><div style="left:1px;top:1px;width:25.5px;height:5px;background:#1f5228"></div><div style="left:5px;top:3px;font-size:12px;letter-spacing:-0.4px;font-weight:bold;color:#f0f0f0;white-space:nowrap;overflow:hidden;width:19.5px;line-height:16px">FOLEY</div><div style="left:3px;bottom:3px;width:19.5px;height:2px;background:#133a1a"></div></div>
<div style="position:absolute;left:1066.7px;top:901.5px;width:5.3px;height:48px;background:#245a2e;border:1px solid #0b4a16;box-shadow:inset 0 0 0 1.2px #20a438;overflow:hidden"><div style="left:3px;bottom:3px;width:0px;height:2px;background:#133a1a"></div></div>
<div style="position:absolute;left:1072px;top:901.5px;width:5.5px;height:48px;background:#245a2e;border:1px solid #0b4a16;box-shadow:inset 0 0 0 1.2px #20a438;overflow:hidden"><div style="left:3px;bottom:3px;width:0px;height:2px;background:#133a1a"></div></div>
<div style="position:absolute;left:1077.5px;top:901.5px;width:7.2px;height:48px;background:#245a2e;border:1px solid #0b4a16;box-shadow:inset 0 0 0 1.2px #20a438;overflow:hidden"><div style="left:3px;bottom:3px;width:0px;height:2px;background:#133a1a"></div></div>
<div style="position:absolute;left:1110px;top:901.5px;width:36px;height:48px;background:#245a2e;border:1px solid #0b4a16;box-shadow:inset 0 0 0 1.2px #20a438;overflow:hidden"><div style="left:1px;top:1px;width:34px;height:5px;background:#1f5228"></div><div style="left:5px;top:3px;font-size:12px;letter-spacing:-0.4px;font-weight:bold;color:#f0f0f0;white-space:nowrap;overflow:hidden;width:28px;line-height:16px">FOLEY</div><div style="left:3px;bottom:3px;width:28px;height:2px;background:#133a1a"></div></div>
<div style="position:absolute;left:1146px;top:901.5px;width:4.8px;height:48px;background:#245a2e;border:1px solid #0b4a16;box-shadow:inset 0 0 0 1.2px #20a438;overflow:hidden"><div style="left:0.5px;top:0;width:1.2px;height:48px;background:rgba(10,40,15,0.6)"></div><div style="left:3px;bottom:3px;width:0px;height:2px;background:#133a1a"></div></div>
<div style="position:absolute;left:1231px;top:901.5px;width:4px;height:48px;background:#245a2e;border:1px solid #0b4a16;box-shadow:inset 0 0 0 1.2px #20a438;overflow:hidden"><div style="left:3px;bottom:3px;width:0px;height:2px;background:#133a1a"></div></div>
<div style="position:absolute;left:1235px;top:901.5px;width:57.5px;height:48px;background:#245a2e;border:1px solid #0b4a16;box-shadow:inset 0 0 0 1.2px #20a438;overflow:hidden"><div style="left:21.1px;top:0;width:1.2px;height:48px;background:rgba(10,40,15,0.6)"></div><div style="left:1px;top:1px;width:55.5px;height:5px;background:#1f5228"></div><div style="left:5px;top:3px;font-size:12px;letter-spacing:-0.4px;font-weight:bold;color:#f0f0f0;white-space:nowrap;overflow:hidden;width:49.5px;line-height:16px">FOLEY</div><div style="left:3px;bottom:3px;width:49.5px;height:2px;background:#133a1a"></div></div>
<div style="position:absolute;left:1292.5px;top:901.5px;width:45.0px;height:48px;background:#245a2e;border:1px solid #0b4a16;box-shadow:inset 0 0 0 1.2px #20a438;overflow:hidden"><div style="left:1px;top:1px;width:43.0px;height:5px;background:#1f5228"></div><div style="left:5px;top:3px;font-size:12px;letter-spacing:-0.4px;font-weight:bold;color:#f0f0f0;white-space:nowrap;overflow:hidden;width:37.0px;line-height:16px">FOLEY</div><div style="left:3px;bottom:3px;width:37.0px;height:2px;background:#133a1a"></div></div>
<div style="position:absolute;left:1337.5px;top:901.5px;width:151.0px;height:48px;background:#245a2e;border:1px solid #0b4a16;box-shadow:inset 0 0 0 1.2px #20a438;overflow:hidden"><div style="left:28.3px;top:0;width:1.2px;height:48px;background:rgba(10,40,15,0.6)"></div><div style="left:137.9px;top:0;width:1.2px;height:48px;background:rgba(10,40,15,0.6)"></div><div style="left:1px;top:1px;width:149.0px;height:5px;background:#1f5228"></div><div style="left:5px;top:3px;font-size:12px;letter-spacing:-0.4px;font-weight:bold;color:#f0f0f0;white-space:nowrap;overflow:hidden;width:143.0px;line-height:16px">FOLEY</div><div style="left:3px;bottom:3px;width:143.0px;height:2px;background:#133a1a"></div></div>
<div style="position:absolute;left:1489.4px;top:901.5px;width:84.6px;height:48px;background:#245a2e;border:1px solid #0b4a16;box-shadow:inset 0 0 0 1.2px #20a438;overflow:hidden"><div style="left:1px;top:1px;width:82.6px;height:5px;background:#1f5228"></div><div style="left:5px;top:3px;font-size:12px;letter-spacing:-0.4px;font-weight:bold;color:#f0f0f0;white-space:nowrap;overflow:hidden;width:76.6px;line-height:16px">FOLEY</div><div style="left:3px;bottom:3px;width:76.6px;height:2px;background:#133a1a"></div></div>
<div style="position:absolute;left:1574px;top:901.5px;width:80.8px;height:48px;background:#245a2e;border:1px solid #0b4a16;box-shadow:inset 0 0 0 1.2px #20a438;overflow:hidden"><div style="left:11.1px;top:0;width:1.2px;height:48px;background:rgba(10,40,15,0.6)"></div><div style="left:1px;top:1px;width:78.8px;height:5px;background:#1f5228"></div><div style="left:5px;top:3px;font-size:12px;letter-spacing:-0.4px;font-weight:bold;color:#f0f0f0;white-space:nowrap;overflow:hidden;width:72.8px;line-height:16px">FOLEY</div><div style="left:3px;bottom:3px;width:72.8px;height:2px;background:#133a1a"></div></div>
<div style="position:absolute;left:1654.8px;top:901.5px;width:127.1px;height:48px;background:#245a2e;border:1px solid #0b4a16;box-shadow:inset 0 0 0 1.2px #20a438;overflow:hidden"><div style="left:39.9px;top:0;width:1.2px;height:48px;background:rgba(10,40,15,0.6)"></div><div style="left:1px;top:1px;width:125.1px;height:5px;background:#1f5228"></div><div style="left:5px;top:3px;font-size:12px;letter-spacing:-0.4px;font-weight:bold;color:#f0f0f0;white-space:nowrap;overflow:hidden;width:119.1px;line-height:16px">FOLEY</div><div style="left:3px;bottom:3px;width:119.1px;height:2px;background:#133a1a"></div></div>
<div style="position:absolute;left:1781.9px;top:901.5px;width:111.6px;height:48px;background:#245a2e;border:1px solid #0b4a16;box-shadow:inset 0 0 0 1.2px #20a438;overflow:hidden"><div style="left:22.5px;top:0;width:1.2px;height:48px;background:rgba(10,40,15,0.6)"></div><div style="left:1px;top:1px;width:109.6px;height:5px;background:#1f5228"></div><div style="left:5px;top:3px;font-size:12px;letter-spacing:-0.4px;font-weight:bold;color:#f0f0f0;white-space:nowrap;overflow:hidden;width:103.6px;line-height:16px">FOLEY</div><div style="left:3px;bottom:3px;width:103.6px;height:2px;background:#133a1a"></div></div>
<div style="position:absolute;left:1893.5px;top:901.5px;width:4.5px;height:48px;background:#245a2e;border:1px solid #0b4a16;box-shadow:inset 0 0 0 1.2px #20a438;overflow:hidden"><div style="left:3px;bottom:3px;width:0px;height:2px;background:#133a1a"></div></div>
<div style="position:absolute;left:879.2px;top:955px;width:83.8px;height:50px;background:#3a9a4c;border:1.5px solid #66f070;overflow:hidden"><div style="left:48.0px;top:0;width:1.2px;height:50px;background:rgba(20,70,30,0.5)"></div><div style="left:2px;top:23px;width:77.8px;height:1.5px;background:#1a5a28"></div></div>
<div style="position:absolute;left:1000px;top:955px;width:27.2px;height:50px;background:#3a9a4c;border:1.5px solid #66f070;overflow:hidden"><div style="left:2px;top:23px;width:21.2px;height:1.5px;background:#1a5a28"></div></div>
<div style="position:absolute;left:1040px;top:955px;width:28px;height:50px;background:#3a9a4c;border:1.5px solid #66f070;overflow:hidden"><div style="left:2px;top:23px;width:22px;height:1.5px;background:#1a5a28"></div></div>
<div style="position:absolute;left:1110.8px;top:955px;width:33.4px;height:50px;background:#3a9a4c;border:1.5px solid #66f070;overflow:hidden"><div style="left:2px;top:23px;width:27.4px;height:1.5px;background:#1a5a28"></div></div>
<div style="position:absolute;left:1231.6px;top:955px;width:4.4px;height:50px;background:#3a9a4c;border:1.5px solid #66f070;overflow:hidden"><div style="left:2px;top:23px;width:0px;height:1.5px;background:#1a5a28"></div></div>
<div style="position:absolute;left:1236px;top:955px;width:56.1px;height:50px;background:#3a9a4c;border:1.5px solid #66f070;overflow:hidden"><div style="left:20.1px;top:0;width:1.2px;height:50px;background:rgba(20,70,30,0.5)"></div><div style="left:2px;top:23px;width:50.1px;height:1.5px;background:#1a5a28"></div></div>
<div style="position:absolute;left:1293.4px;top:955px;width:28.6px;height:50px;background:#3a9a4c;border:1.5px solid #66f070;overflow:hidden"><div style="left:2px;top:23px;width:22.6px;height:1.5px;background:#1a5a28"></div></div>
<div style="position:absolute;left:1322.5px;top:955px;width:16.5px;height:50px;background:#3a9a4c;border:1.5px solid #66f070;overflow:hidden"><div style="left:2px;top:23px;width:10.5px;height:1.5px;background:#1a5a28"></div></div>
<div style="position:absolute;left:1339.8px;top:955px;width:49.8px;height:50px;background:#3a9a4c;border:1.5px solid #66f070;overflow:hidden"><div style="left:26.0px;top:0;width:1.2px;height:50px;background:rgba(20,70,30,0.5)"></div><div style="left:2px;top:23px;width:43.8px;height:1.5px;background:#1a5a28"></div></div>
<div style="position:absolute;left:1499.7px;top:955px;width:15.3px;height:50px;background:#3a9a4c;border:1.5px solid #66f070;overflow:hidden"><div style="left:2px;top:23px;width:9.3px;height:1.5px;background:#1a5a28"></div></div>
<div style="position:absolute;left:1515px;top:955px;width:5px;height:50px;background:#3a9a4c;border:1.5px solid #66f070;overflow:hidden"><div style="left:2px;top:23px;width:0px;height:1.5px;background:#1a5a28"></div></div>
<div style="position:absolute;left:1520px;top:955px;width:36px;height:50px;background:#3a9a4c;border:1.5px solid #66f070;overflow:hidden"><div style="left:2px;top:23px;width:30px;height:1.5px;background:#1a5a28"></div></div>
<div style="position:absolute;left:1556.9px;top:955px;width:25.3px;height:50px;background:#3a9a4c;border:1.5px solid #66f070;overflow:hidden"><div style="left:2px;top:23px;width:19.3px;height:1.5px;background:#1a5a28"></div></div>
<div style="position:absolute;left:1582.2px;top:955px;width:13.7px;height:50px;background:#3a9a4c;border:1.5px solid #66f070;overflow:hidden"><div style="left:2.9px;top:0;width:1.2px;height:50px;background:rgba(20,70,30,0.5)"></div><div style="left:2px;top:23px;width:7.699999999999999px;height:1.5px;background:#1a5a28"></div></div>
<div style="position:absolute;left:1605.6px;top:955px;width:16.4px;height:50px;background:#3a9a4c;border:1.5px solid #66f070;overflow:hidden"><div style="left:2px;top:23px;width:10.399999999999999px;height:1.5px;background:#1a5a28"></div></div>
<div style="position:absolute;left:1622px;top:955px;width:18px;height:50px;background:#3a9a4c;border:1.5px solid #66f070;overflow:hidden"><div style="left:2px;top:23px;width:12px;height:1.5px;background:#1a5a28"></div></div>
<div style="position:absolute;left:1643px;top:955px;width:27.3px;height:50px;background:#3a9a4c;border:1.5px solid #66f070;overflow:hidden"><div style="left:2px;top:23px;width:21.3px;height:1.5px;background:#1a5a28"></div></div>
<div style="position:absolute;left:1730.9px;top:955px;width:23.4px;height:50px;background:#3a9a4c;border:1.5px solid #66f070;overflow:hidden"><div style="left:2px;top:23px;width:17.4px;height:1.5px;background:#1a5a28"></div></div>
<div style="position:absolute;left:1754.3px;top:955px;width:8.5px;height:50px;background:#3a9a4c;border:1.5px solid #66f070;overflow:hidden"><div style="left:2px;top:23px;width:2.5px;height:1.5px;background:#1a5a28"></div></div>
<div style="position:absolute;left:1839.6px;top:955px;width:57.6px;height:50px;background:#3a9a4c;border:1.5px solid #66f070;overflow:hidden"><div style="left:2px;top:23px;width:51.6px;height:1.5px;background:#1a5a28"></div></div>
<svg style="position:absolute;left:870px;top:950px" width="1050" height="50"><path d="M10 50 L71 5" stroke="#e8f0e8" stroke-width="2"/><path d="M243 50 L246 5" stroke="#e8f0e8" stroke-width="1.6"/><path d="M509 5 L518 50" stroke="#e8f0e8" stroke-width="1.6"/><path d="M797.5 5 L799 50" stroke="#e8f0e8" stroke-width="1.6"/><path d="M979.5 5 L980 50" stroke="#e8f0e8" stroke-width="1.6"/><path d="M1023.5 5 L1025 50" stroke="#e8f0e8" stroke-width="1.6"/></svg>
<div style="left:887px;top:975px;width:16px;height:22px;background:#2fa849"></div>
<svg style="position:absolute;left:889px;top:984px" width="12" height="9"><path d="M0 9 L12 0 V9Z" fill="#0a1a0a"/></svg>
<div style="left:1253px;top:975px;width:16px;height:22px;background:#2fa849"></div>
<svg style="position:absolute;left:1255px;top:984px" width="12" height="9"><path d="M0 9 L12 0 V9Z" fill="#0a1a0a"/></svg>
<div style="left:1355px;top:975px;width:16px;height:22px;background:#2fa849"></div>
<svg style="position:absolute;left:1357px;top:984px" width="12" height="9"><path d="M0 9 L12 0 V9Z" fill="#0a1a0a"/></svg>
<div style="left:1866px;top:975px;width:16px;height:22px;background:#2fa849"></div>
<svg style="position:absolute;left:1868px;top:984px" width="12" height="9"><path d="M0 9 L12 0 V9Z" fill="#0a1a0a"/></svg>
<div style="left:990px;top:923px;width:36px;height:7px;background:#0a4a12;border-radius:3px"></div>
<div style="left:926px;top:905px;width:32px;height:2.5px;background:#26b24a"></div>
<div style="left:1006px;top:905px;width:21px;height:2.5px;background:#26b24a"></div>
<div style="left:1830px;top:905px;width:62px;height:3px;background:#26b24a"></div>
<div style="left:1826px;top:909px;width:54px;height:3px;background:#26b24a"></div>
<div style="left:1845px;top:913px;width:48px;height:4px;background:#26b24a"></div>
<div style="left:1832px;top:917px;width:28px;height:2px;background:#26b24a"></div>
<div style="left:1710px;top:905px;width:20px;height:2px;background:#26b24a"></div>
<div style="left:1745px;top:905px;width:12px;height:2px;background:#26b24a"></div>
<div style="left:1590px;top:905px;width:50px;height:2px;background:#26b24a"></div>
<div style="left:1620px;top:920px;width:30px;height:2px;background:#26b24a"></div>
<div style="left:1358px;top:905px;width:8px;height:2px;background:#26b24a"></div>
<div style="left:1410px;top:907px;width:20px;height:3px;background:#26b24a"></div>
<div style="left:1435px;top:925px;width:12px;height:3px;background:#26b24a"></div>
<div style="left:1493px;top:921px;width:32px;height:2px;background:#26b24a"></div>
<div style="position:absolute;left:867.8px;top:92px;width:1.6px;height:908px;background:#00d4e6"></div>
<div style="position:absolute;left:1898px;top:86px;width:14px;height:914px;background:#434446"></div>
<div style="position:absolute;left:1912px;top:86px;width:7px;height:914px;background:#222528"></div>
<div style="position:absolute;left:1918.6px;top:0px;width:1.4px;height:1000px;background:#b0b2b4"></div>
<div style="position:absolute;left:1898.5px;top:93px;width:12.5px;height:23px;background:#313336;border-radius:3px"></div>
<svg style="position:absolute;left:1899px;top:98px" width="11" height="12"><path d="M1 2 H10 L5.5 10Z" fill="#e6e6e6"/></svg>
<div style="position:absolute;left:1898.5px;top:122px;width:12.5px;height:21px;background:#313336;border-radius:3px"></div>
<svg style="position:absolute;left:1899px;top:123px" width="11" height="20"><path d="M2 6 L5.5 2.5 L9 6 M2 13 L5.5 16.5 L9 13" fill="none" stroke="#e6e6e6" stroke-width="1.4"/></svg>
<div style="position:absolute;left:1898.5px;top:150px;width:12.5px;height:13px;background:#313336;border-radius:3px"></div>
<svg style="position:absolute;left:1899px;top:151px" width="11" height="11"><path d="M2 9 L9 2" stroke="#e6e6e6" stroke-width="2"/></svg>
<div style="position:absolute;left:1898.5px;top:167px;width:12.5px;height:57px;background:#313336;border-radius:3px"></div>
<div style="position:absolute;left:1904px;top:170px;width:1.2px;height:45px;background:#7a7c7e"></div>
<div style="position:absolute;left:1900px;top:210px;width:9.5px;height:9.5px;background:#f2f2f2;border-radius:50%"></div>
<div style="position:absolute;left:1898.5px;top:227px;width:12.5px;height:12px;background:#313336;border-radius:3px"></div>
<svg style="position:absolute;left:1899px;top:228px" width="11" height="10"><path d="M2 7 L5.5 3.5 L9 7" fill="none" stroke="#e6e6e6" stroke-width="1.4"/></svg>
<div style="position:absolute;left:1899px;top:243px;width:12px;height:109px;background:#38393b;border-radius:4px"></div>
<div style="position:absolute;left:1900px;top:245px;width:9.5px;height:105.5px;background:#f2f2f2;border-radius:3px"></div>
<svg style="position:absolute;left:1899px;top:881px" width="11" height="10"><path d="M2 3 L5.5 6.5 L9 3" fill="none" stroke="#e6e6e6" stroke-width="1.4"/></svg>
<div style="position:absolute;left:1898.5px;top:901px;width:12.5px;height:14px;background:#313336;border-radius:3px"></div>
<svg style="position:absolute;left:1899px;top:903px" width="11" height="11"><path d="M1.5 2 H9.5 L5.5 9Z" fill="#e6e6e6"/></svg>
<div style="position:absolute;left:1898.5px;top:918px;width:12.5px;height:82px;background:#313336;border-radius:3px"></div>
<div style="position:absolute;left:1900.5px;top:923px;width:9px;height:2.5px;background:#e6e6e6"></div>
<div style="position:absolute;left:1904.5px;top:940px;width:1.2px;height:58px;background:#7a7c7e"></div>
<div style="position:absolute;left:1900px;top:936px;width:10px;height:10px;background:#f2f2f2;border-radius:50%"></div>
<div style="position:absolute;left:696.5px;top:545px;width:3px;height:27px;background:repeating-linear-gradient(180deg,#fff 0 5px,#000 5px 7px)"></div>
</div></body></html>
